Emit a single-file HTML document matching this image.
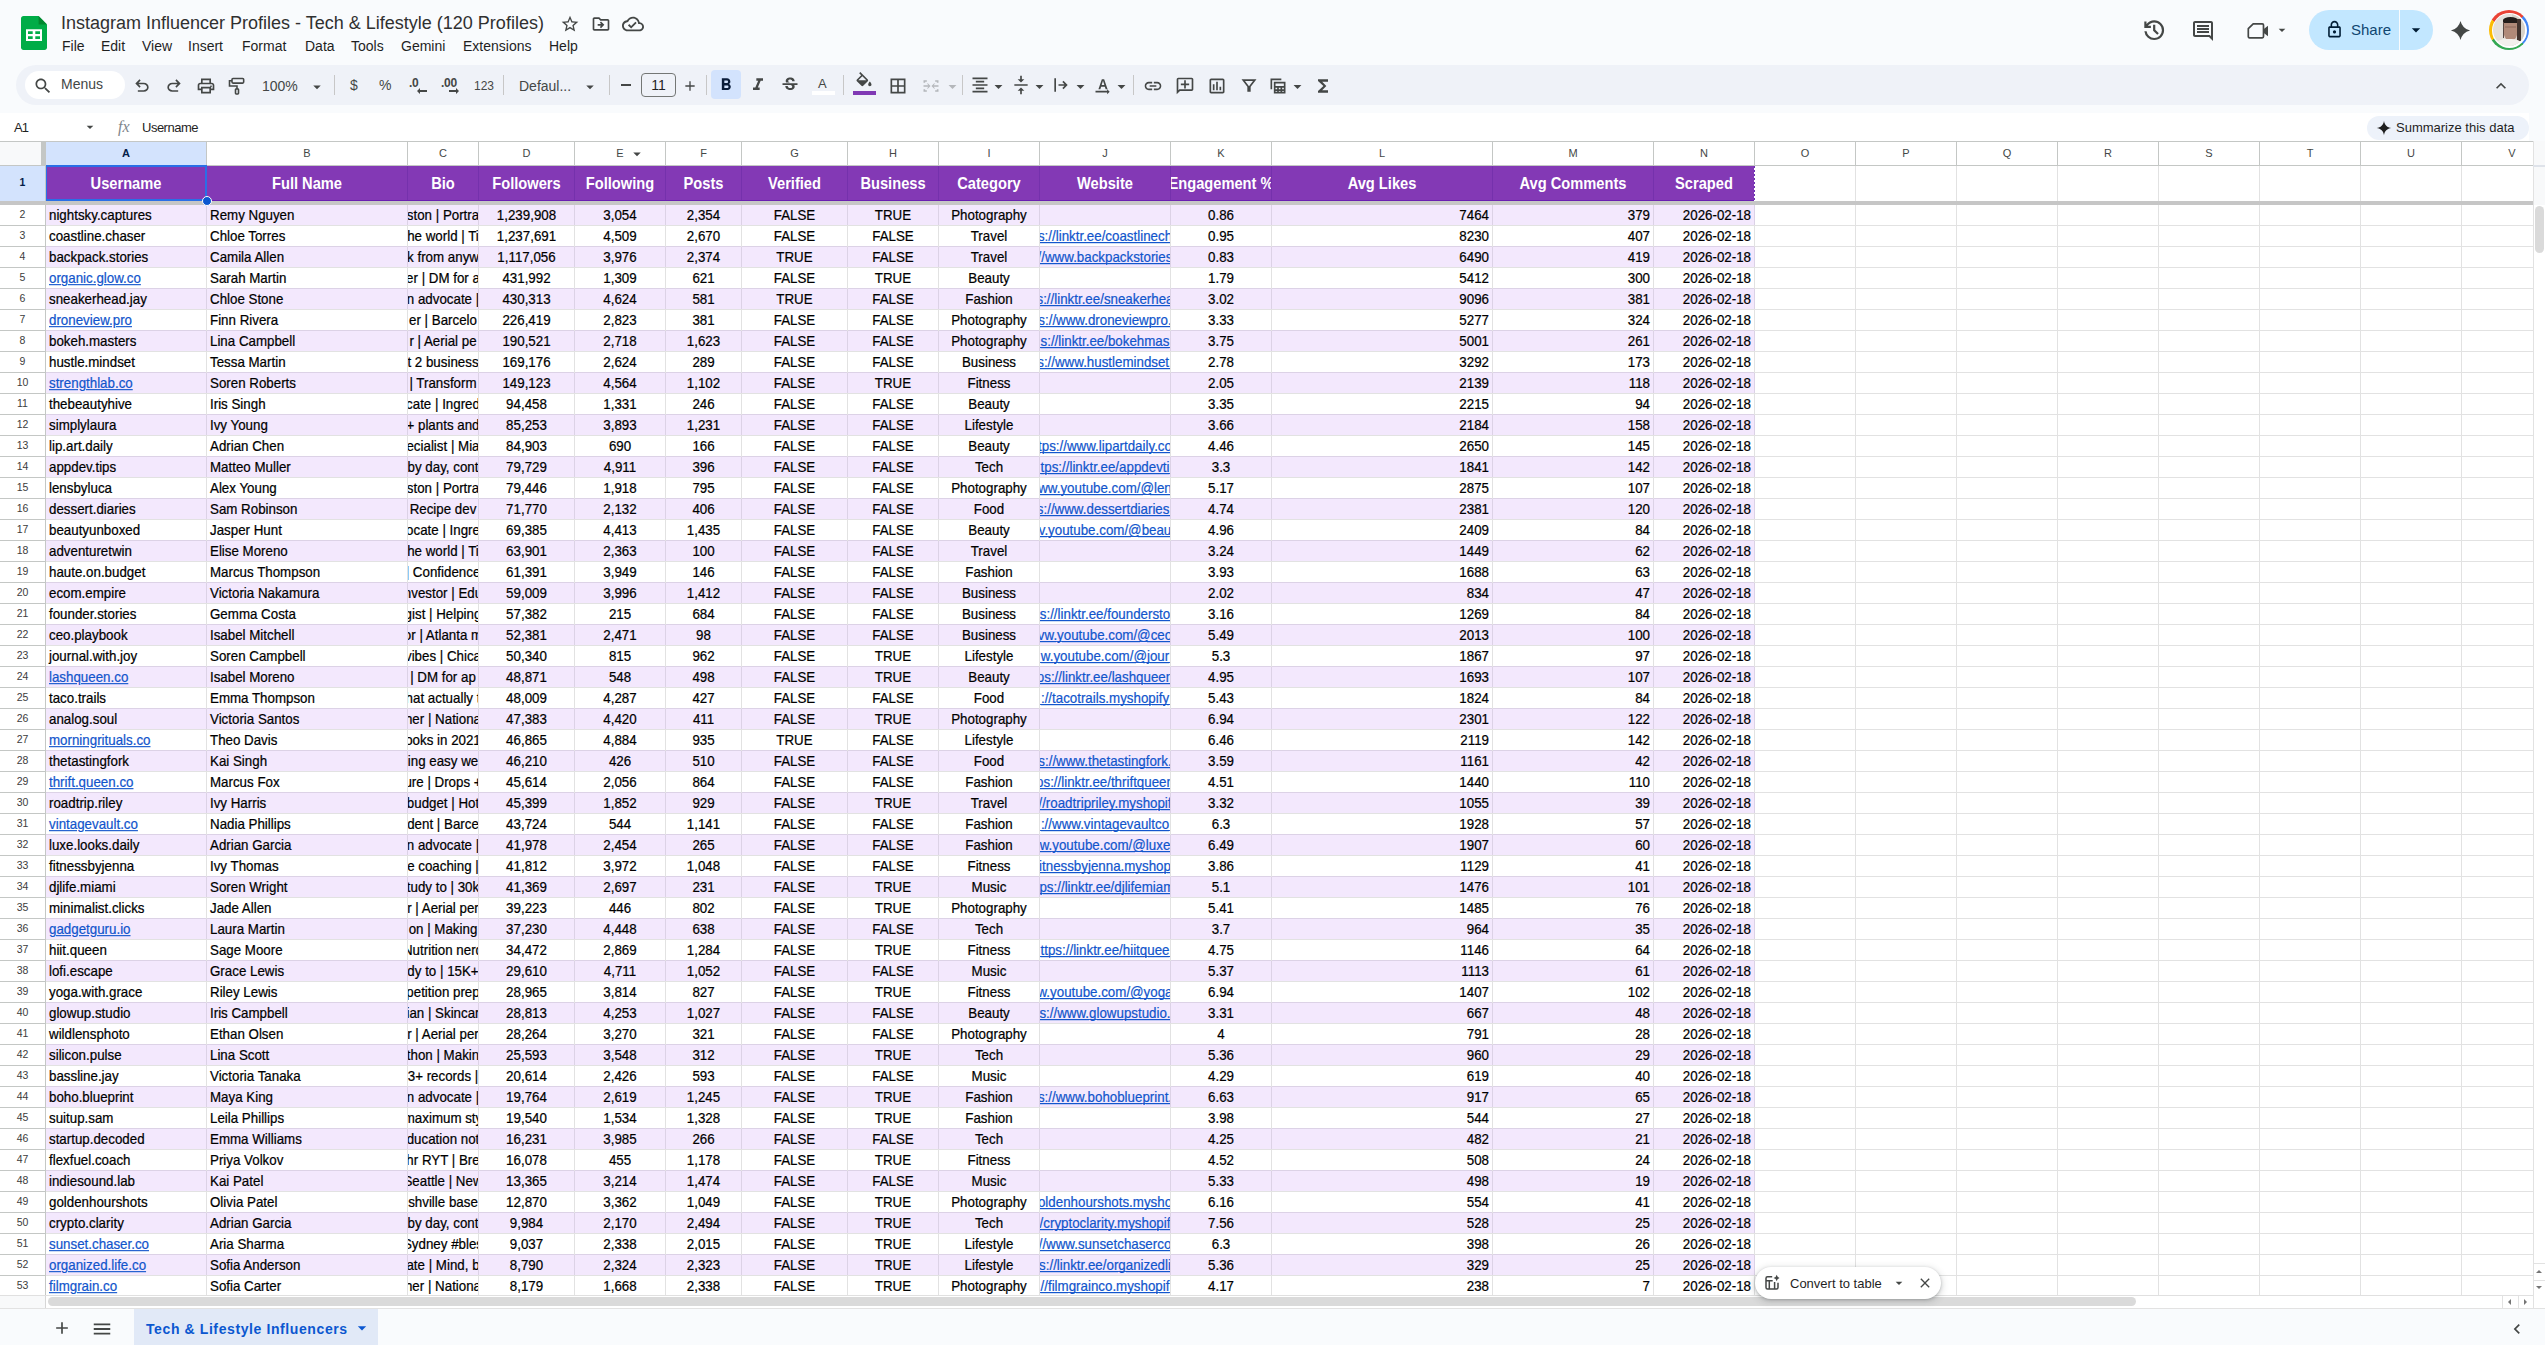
<!DOCTYPE html><html><head><meta charset="utf-8"><style>
*{margin:0;padding:0;box-sizing:border-box}
html,body{width:2545px;height:1345px;overflow:hidden;background:#f9fbfd;font-family:"Liberation Sans",sans-serif;color:#1f1f1f}
.ab{position:absolute}
.t{position:absolute;white-space:nowrap;line-height:1}
.c{position:absolute;white-space:nowrap;overflow:hidden;font-size:13.33px;line-height:20px;height:20px;color:#000;-webkit-text-stroke-width:0.2px;transform:scaleY(1.11);transform-origin:0 5px}
.l{text-align:left;padding-left:3px}
.m{text-align:center}
.r{text-align:right;padding-right:3px}
.lk{color:#1155cc;text-decoration:underline}
.hd{position:absolute;top:166px;height:34px;line-height:34px;font-size:14.67px;font-weight:bold;color:#fff;text-align:center;white-space:nowrap;overflow:hidden;transform:translateY(0.6px) scaleY(1.1);transform-origin:50% 22px}
.ch{position:absolute;top:142px;height:23px;line-height:23px;font-size:11px;color:#444746;text-align:center}
.rn{position:absolute;left:0;width:45px;height:20px;line-height:19px;font-size:10.5px;color:#3c3c3c;text-align:center}
</style></head><body>

<svg class="ab" style="left:21px;top:16px;width:26px;height:34px" viewBox="0 0 26 34">
<path d="M2.5 0H17.6L26 8.6V31.5C26 32.9 24.9 34 23.5 34H2.5C1.1 34 0 32.9 0 31.5V2.5C0 1.1 1.1 0 2.5 0Z" fill="#00ac47"/>
<path d="M17.6 0L26 8.6H17.6Z" fill="#00882f"/>
<path d="M5 13.2H21V25H5Z M7 15.2V18H11.7V15.2Z M14.3 15.2V18H19V15.2Z M7 20.3V23H11.7V20.3Z M14.3 20.3V23H19V20.3Z" fill="#fff" fill-rule="evenodd"/>
</svg>
<div class="t" style="left:61px;top:14px;font-size:18px;color:#303030">Instagram Influencer Profiles - Tech &amp; Lifestyle (120 Profiles)</div>
<svg style="position:absolute;left:560px;top:14px;width:20px;height:20px" viewBox="0 0 24 24"><path fill="#444746" d="M22 9.24l-7.19-.62L12 2 9.19 8.63 2 9.24l5.46 4.73L5.82 21 12 17.27 18.18 21l-1.63-7.03L22 9.24zM12 15.4l-3.76 2.27 1-4.28-3.32-2.88 4.38-.38L12 6.1l1.71 4.04 4.38.38-3.32 2.88 1 4.28L12 15.4z" /></svg>
<svg style="position:absolute;left:591px;top:14px;width:20px;height:20px" viewBox="0 0 24 24"><path fill="#444746" d="M20 6h-8l-2-2H4c-1.1 0-2 .9-2 2v12c0 1.1.9 2 2 2h16c1.1 0 2-.9 2-2V8c0-1.1-.9-2-2-2zm0 12H4V6h5.17l2 2H20v10zM12.16 12L10.6 10.44 12 9l4 4-4 4-1.4-1.44L12.16 14H8v-2z" /></svg>
<svg style="position:absolute;left:622px;top:13px;width:22px;height:22px" viewBox="0 0 24 24"><path fill="#444746" d="M19.35 10.04C18.67 6.59 15.64 4 12 4 9.11 4 6.6 5.64 5.35 8.04 2.34 8.36 0 10.91 0 14c0 3.31 2.69 6 6 6h13c2.76 0 5-2.24 5-5 0-2.64-2.05-4.78-4.65-4.96zM19 18H6c-2.21 0-4-1.79-4-4 0-2.05 1.53-3.76 3.56-3.97l1.07-.11.5-.95C8.08 7.14 9.94 6 12 6c2.62 0 4.88 1.86 5.39 4.43l.3 1.5 1.53.11c1.56.1 2.78 1.41 2.78 2.96 0 1.65-1.35 3-3 3zm-9-3.82l-2.09-2.09L6.5 13.5 10 17l6.01-6.01-1.41-1.41z" /></svg>
<div class="t" style="left:62px;top:39px;font-size:14px;color:#1f1f1f">File</div>
<div class="t" style="left:101px;top:39px;font-size:14px;color:#1f1f1f">Edit</div>
<div class="t" style="left:142px;top:39px;font-size:14px;color:#1f1f1f">View</div>
<div class="t" style="left:188px;top:39px;font-size:14px;color:#1f1f1f">Insert</div>
<div class="t" style="left:242px;top:39px;font-size:14px;color:#1f1f1f">Format</div>
<div class="t" style="left:305px;top:39px;font-size:14px;color:#1f1f1f">Data</div>
<div class="t" style="left:351px;top:39px;font-size:14px;color:#1f1f1f">Tools</div>
<div class="t" style="left:401px;top:39px;font-size:14px;color:#1f1f1f">Gemini</div>
<div class="t" style="left:463px;top:39px;font-size:14px;color:#1f1f1f">Extensions</div>
<div class="t" style="left:549px;top:39px;font-size:14px;color:#1f1f1f">Help</div>
<svg class="ab" style="left:2140.8px;top:16.6px;width:26.4px;height:26.4px" viewBox="0 0 24 24"><path fill="#444746" d="M12 21q-3.45 0-6.012-2.288T3.05 13H5.1q.35 2.6 2.313 4.3T12 19q2.925 0 4.963-2.037T19 12t-2.037-4.962T12 5q-1.725 0-3.225.8T6.25 8H9v2H3V4h2v2.35q1.275-1.6 3.113-2.475T12 3q1.875 0 3.513.713t2.85 1.924 1.925 2.85T21 12t-.712 3.513-1.925 2.85-2.85 1.925T12 21m2.8-4.8L11 12.4V7h2v4.6l3.2 3.2z"/></svg>
<svg style="position:absolute;left:2191px;top:19px;width:24px;height:24px" viewBox="0 0 24 24"><path fill="#444746" d="M21.99 4c0-1.1-.89-2-1.99-2H4c-1.1 0-2 .9-2 2v12c0 1.1.9 2 2 2h14l4 4-.01-18zM20 4v13.17L18.83 16H4V4h16zM6 12h12v2H6zm0-3h12v2H6zm0-3h12v2H6z" /></svg>
<svg class="ab" style="left:2246px;top:21px;width:24px;height:20px" viewBox="0 0 24 20"><path fill="none" stroke="#444746" stroke-width="1.7" stroke-linejoin="round" d="M7.2 2.9H16.3Q17.5 2.9 17.5 4.1V15.6Q17.5 16.8 16.3 16.8H3.5Q2.3 16.8 2.3 15.6V7.7Z"/><path fill="#444746" d="M17.5 8.3L22 4.8V15.2L17.5 11.7Z"/></svg>
<svg style="position:absolute;left:2274px;top:22px;width:16px;height:16px" viewBox="0 0 24 24"><path fill="#444746" d="M7 10l5 5 5-5z" /></svg>
<div class="ab" style="left:2309px;top:10px;width:124px;height:40px;border-radius:20px;background:#c2e7ff"></div>
<div class="ab" style="left:2399px;top:10px;width:1px;height:40px;background:#f9fbfd"></div>
<svg style="position:absolute;left:2325px;top:20px;width:19px;height:19px" viewBox="0 0 24 24"><path fill="#001d35" d="M18 8h-1V6c0-2.76-2.24-5-5-5S7 3.24 7 6v2H6c-1.1 0-2 .9-2 2v10c0 1.1.9 2 2 2h12c1.1 0 2-.9 2-2V10c0-1.1-.9-2-2-2zM9 6c0-1.66 1.34-3 3-3s3 1.34 3 3v2H9V6zm9 14H6V10h12v10zm-6-3c1.1 0 2-.9 2-2s-.9-2-2-2-2 .9-2 2 .9 2 2 2z" /></svg>
<div class="t" style="left:2351px;top:22px;font-size:15px;color:#0f4670">Share</div>
<svg style="position:absolute;left:2406px;top:20px;width:20px;height:20px" viewBox="0 0 24 24"><path fill="#001d35" d="M7 10l5 5 5-5z" /></svg>
<svg style="position:absolute;left:2449px;top:19px;width:23px;height:23px" viewBox="0 0 24 24"><path fill="#444746" d="M12 2Q14 10 22 12Q14 14 12 22Q10 14 2 12Q10 10 12 2Z" /></svg>
<div class="ab" style="left:2489px;top:10px;width:40px;height:40px;border-radius:50%;background:conic-gradient(#ea4335 0deg 45deg,#4285f4 45deg 135deg,#34a853 135deg 240deg,#fbbc04 240deg 300deg,#ea4335 300deg 360deg)"></div>
<div class="ab" style="left:2491.5px;top:12.5px;width:35px;height:35px;border-radius:50%;background:#fff"></div>
<div class="ab" style="left:2493px;top:14px;width:32px;height:32px;border-radius:50%;overflow:hidden;background:#e4e0da"><div class="ab" style="left:19px;top:0;width:13px;height:32px;background:#d8d2ca"></div><div class="ab" style="left:10px;top:4px;width:15px;height:23px;border-radius:45% 45% 50% 50%;background:#b08a78"></div><div class="ab" style="left:10px;top:3px;width:15px;height:6px;border-radius:50% 50% 10% 10%;background:#231d1a"></div><div class="ab" style="left:24px;top:5px;width:4px;height:22px;background:#43352f"></div><div class="ab" style="left:10px;top:8px;width:1px;height:16px;background:#5a4a44"></div><div class="ab" style="left:12px;top:12px;width:11px;height:2px;background:#7d5a4c;opacity:.35"></div><div class="ab" style="left:4px;top:25px;width:24px;height:10px;border-radius:40% 40% 0 0;background:#f2f0ec"></div></div>
<div class="ab" style="left:16px;top:65px;width:2513px;height:40px;border-radius:20px;background:#eff2f8"></div>
<div class="ab" style="left:25px;top:71px;width:100px;height:28px;border-radius:14px;background:#fff"></div>
<svg style="position:absolute;left:33px;top:76px;width:20px;height:20px" viewBox="0 0 24 24"><path fill="#444746" d="M15.5 14h-.79l-.28-.27C15.41 12.59 16 11.11 16 9.5 16 5.91 13.09 3 9.5 3S3 5.91 3 9.5 5.91 16 9.5 16c1.61 0 3.09-.59 4.23-1.57l.27.28v.79l5 4.99L20.49 19l-4.99-5zm-6 0C7.01 14 5 11.99 5 9.5S7.01 5 9.5 5 14 7.01 14 9.5 11.99 14 9.5 14z" /></svg>
<div class="t" style="left:61px;top:77px;font-size:14px;color:#444746">Menus</div>
<svg style="position:absolute;left:132px;top:76px;width:20px;height:20px" viewBox="0 0 24 24"><path fill="#444746" d="M7 19v-2h7.1q1.58 0 2.74-1T18 13.5 16.84 11 14.1 10H7.8l2.6 2.6L9 14 4 9l5-5 1.4 1.4L7.8 8h6.3q2.43 0 4.16 1.58T20 13.5t-1.74 3.93T14.1 19z" /></svg>
<svg class="ab" style="left:164px;top:76px;width:20px;height:20px;transform:scaleX(-1)" viewBox="0 0 24 24"><path fill="#444746" d="M7 19v-2h7.1q1.58 0 2.74-1T18 13.5 16.84 11 14.1 10H7.8l2.6 2.6L9 14 4 9l5-5 1.4 1.4L7.8 8h6.3q2.43 0 4.16 1.58T20 13.5t-1.74 3.93T14.1 19z"/></svg>
<svg style="position:absolute;left:196px;top:76px;width:20px;height:20px" viewBox="0 0 24 24"><path fill="#444746" d="M19 8h-1V3H6v5H5c-1.66 0-3 1.34-3 3v6h4v4h12v-4h4v-6c0-1.66-1.34-3-3-3zM8 5h8v3H8V5zm8 14H8v-4h8v4zm4-4h-2v-2H6v2H4v-4c0-.55.45-1 1-1h14c.55 0 1 .45 1 1v4z M18 11.5a1 1 0 1 0 0.01 0z" /></svg>
<svg class="ab" style="left:227px;top:76px;width:20px;height:20px" viewBox="0 0 24 24"><g fill="none" stroke="#444746" stroke-width="1.9" transform="translate(24,0) scale(-1,1)"><rect x="4" y="3" width="14" height="5.5" rx="1.2"/><path d="M18 5.7H21V12H12V15.5"/><rect x="10.2" y="15.5" width="3.6" height="6" rx="0.8"/></g></svg>
<div class="t" style="left:262px;top:79px;font-size:14px;color:#444746">100%</div>
<svg style="position:absolute;left:308px;top:78px;width:18px;height:18px" viewBox="0 0 24 24"><path fill="#444746" d="M7 10l5 5 5-5z" /></svg>
<div class="ab" style="left:334px;top:75px;width:1px;height:20px;background:#c7c7c7"></div>
<div class="t" style="left:350px;top:78px;font-size:14px;color:#444746">$</div>
<div class="t" style="left:379px;top:78px;font-size:14px;color:#444746">%</div>
<div class="t" style="left:409px;top:77px;font-size:12px;font-weight:bold;color:#444746;letter-spacing:-0.3px">.0</div>
<svg style="position:absolute;left:417px;top:88px;width:10px;height:6px" viewBox="0 0 10 6"><path fill="#444746" d="M0 3L3 0V2H10V4H3V6Z" /></svg>
<div class="t" style="left:441px;top:77px;font-size:12px;font-weight:bold;color:#444746;letter-spacing:-0.3px">.00</div>
<svg style="position:absolute;left:449px;top:88px;width:10px;height:6px" viewBox="0 0 10 6"><path fill="#444746" d="M10 3L7 0V2H0V4H7V6Z" /></svg>
<div class="t" style="left:474px;top:80px;font-size:12px;color:#444746">123</div>
<div class="ab" style="left:503px;top:75px;width:1px;height:20px;background:#c7c7c7"></div>
<div class="t" style="left:519px;top:79px;font-size:14px;color:#444746">Defaul...</div>
<svg style="position:absolute;left:581px;top:78px;width:18px;height:18px" viewBox="0 0 24 24"><path fill="#444746" d="M7 10l5 5 5-5z" /></svg>
<div class="ab" style="left:609px;top:75px;width:1px;height:20px;background:#c7c7c7"></div>
<div class="ab" style="left:621px;top:84px;width:10px;height:2px;background:#444746"></div>
<div class="ab" style="left:641px;top:73px;width:35px;height:24px;border:1px solid #747775;border-radius:4px"></div>
<div class="t" style="left:641px;top:78px;width:35px;text-align:center;font-size:14px;color:#1f1f1f">11</div>
<svg style="position:absolute;left:682px;top:78px;width:16px;height:16px" viewBox="0 0 24 24"><path fill="#444746" d="M19 13h-6v6h-2v-6H5v-2h6V5h2v6h6v2z" /></svg>
<div class="ab" style="left:706px;top:75px;width:1px;height:20px;background:#c7c7c7"></div>
<div class="ab" style="left:711px;top:70px;width:30px;height:29px;border-radius:4px;background:#d3e3fd"></div>
<svg style="position:absolute;left:716px;top:75px;width:20px;height:20px" viewBox="0 0 24 24"><path fill="#0b1d3a" d="M15.6 10.79c.97-.67 1.65-1.77 1.65-2.79 0-2.26-1.75-4-4-4H7v14h7.04c2.09 0 3.71-1.7 3.71-3.79 0-1.52-.86-2.82-2.15-3.42zM10 6.5h3c.83 0 1.5.67 1.5 1.5s-.67 1.5-1.5 1.5h-3v-3zm3.5 9H10v-3h3.5c.83 0 1.5.67 1.5 1.5s-.67 1.5-1.5 1.5z" /></svg>
<svg style="position:absolute;left:748px;top:75px;width:20px;height:20px" viewBox="0 0 24 24"><path fill="#444746" d="M10 4v3h2.21l-3.42 8H6v3h8v-3h-2.21l3.42-8H18V4z" /></svg>
<svg style="position:absolute;left:780px;top:75px;width:20px;height:20px" viewBox="0 0 24 24"><path fill="#444746" d="M7.24 8.75c-.26-.48-.39-1.03-.39-1.67 0-.61.13-1.16.4-1.67.26-.5.63-.93 1.11-1.29.48-.35 1.05-.63 1.7-.83.66-.19 1.39-.29 2.18-.29.81 0 1.54.11 2.21.34.66.22 1.23.54 1.69.94.47.4.83.88 1.08 1.43.25.55.38 1.15.38 1.81h-3.01c0-.31-.05-.59-.15-.85-.09-.27-.24-.49-.44-.68-.2-.19-.45-.33-.75-.44-.3-.1-.66-.16-1.06-.16-.39 0-.74.04-1.03.13-.29.09-.53.21-.72.36-.19.16-.34.34-.44.55-.1.21-.15.43-.15.66 0 .48.25.88.74 1.21.38.25.77.48 1.41.7H7.39c-.05-.08-.11-.17-.15-.25zM21 12v-2H3v2h9.62c.18.07.4.14.55.2.37.17.66.34.87.51.21.17.35.36.43.57.07.2.11.43.11.69 0 .23-.05.45-.14.66-.09.2-.23.38-.42.53-.19.15-.42.26-.71.35-.29.08-.63.13-1.01.13-.43 0-.83-.04-1.18-.13s-.66-.23-.91-.42c-.25-.19-.45-.44-.59-.75-.14-.31-.25-.76-.25-1.21H6.4c0 .55.08 1.13.24 1.58.16.45.37.85.65 1.21.28.35.6.66.98.92.37.26.78.48 1.22.65.44.17.9.3 1.38.39.48.08.96.13 1.44.13.8 0 1.53-.09 2.18-.28s1.21-.45 1.67-.79c.46-.34.82-.77 1.07-1.27s.38-1.07.38-1.71c0-.6-.1-1.14-.31-1.61-.05-.11-.11-.23-.17-.33H21z" /></svg>
<div class="t" style="left:818px;top:77px;font-size:13px;color:#444746">A</div>
<div class="ab" style="left:812px;top:91px;width:23px;height:4px;background:#ffffff"></div>
<div class="ab" style="left:843px;top:75px;width:1px;height:20px;background:#c7c7c7"></div>
<svg style="position:absolute;left:854px;top:72px;width:20px;height:20px" viewBox="0 0 24 24"><path fill="#444746" d="M16.56 8.94L7.62 0 6.21 1.41l2.38 2.38-5.15 5.15c-.59.59-.59 1.54 0 2.12l5.5 5.5c.29.29.68.44 1.06.44s.77-.15 1.06-.44l5.5-5.5c.59-.58.59-1.53 0-2.12zM5.21 10L10 5.21 14.79 10H5.21zM19 11.5s-2 2.17-2 3.5c0 1.1.9 2 2 2s2-.9 2-2c0-1.33-2-3.5-2-3.5z" /></svg>
<div class="ab" style="left:853px;top:91px;width:23px;height:4px;background:#8039b4"></div>
<svg style="position:absolute;left:888px;top:76px;width:20px;height:20px" viewBox="0 0 24 24"><path fill="#444746" d="M3 3v18h18V3H3zm8 16H5v-6h6v6zm0-8H5V5h6v6zm8 8h-6v-6h6v6zm0-8h-6V5h6v6z" /></svg>
<svg style="position:absolute;left:921px;top:76px;width:20px;height:20px" viewBox="0 0 24 24"><path fill="#b4b7bb" d="M3 5h2v3H3zM3 16h2v3H3zM3 5h4v2H3zM3 17h4v2H3zM19 5h2v3h-2zM19 16h2v3h-2zM17 5h4v2h-4zM17 17h4v2h-4zM3 11h6l-2-2 1.4-0 3 3-3 3H7l2-2H3zM21 11h-6l2-2h-1.4l-3 3 3 3H17l-2-2h6z" /></svg>
<svg style="position:absolute;left:942.5px;top:76.5px;width:19px;height:19px" viewBox="0 0 24 24"><path fill="#b4b7bb" d="M7 10l5 5 5-5z" /></svg>
<div class="ab" style="left:962px;top:75px;width:1px;height:20px;background:#c7c7c7"></div>
<svg style="position:absolute;left:970px;top:75px;width:20px;height:20px" viewBox="0 0 24 24"><path fill="#444746" d="M7 15v2h10v-2H7zm-4 6h18v-2H3v2zm0-8h18v-2H3v2zm4-6v2h10V7H7zM3 3v2h18V3H3z" /></svg>
<svg style="position:absolute;left:988.5px;top:76.5px;width:19px;height:19px" viewBox="0 0 24 24"><path fill="#444746" d="M7 10l5 5 5-5z" /></svg>
<svg style="position:absolute;left:1011px;top:75px;width:20px;height:20px" viewBox="0 0 24 24"><path fill="#444746" d="M8 19h3v4h2v-4h3l-4-4-4 4zm8-14h-3V1h-2v4H8l4 4 4-4zM4 11v2h16v-2H4z" /></svg>
<svg style="position:absolute;left:1029.5px;top:76.5px;width:19px;height:19px" viewBox="0 0 24 24"><path fill="#444746" d="M7 10l5 5 5-5z" /></svg>
<svg style="position:absolute;left:1051px;top:75px;width:20px;height:20px" viewBox="0 0 24 24"><path fill="#444746" d="M4 4h2v16H4zM9 11h7.2l-2.6-2.6L15 7l5 5-5 5-1.4-1.4 2.6-2.6H9z" /></svg>
<svg style="position:absolute;left:1070.5px;top:76.5px;width:19px;height:19px" viewBox="0 0 24 24"><path fill="#444746" d="M7 10l5 5 5-5z" /></svg>
<svg style="position:absolute;left:1093px;top:75px;width:20px;height:20px" viewBox="0 0 24 24"><path fill="#444746" d="M6.5 17L10.6 5h2.8l4.1 12h-2.3l-1-3H9.8l-1 3zM10.4 12h3.2L12 7zM3 19h14v-2l3 3-3 3v-2H3z" /></svg>
<svg style="position:absolute;left:1111.5px;top:76.5px;width:19px;height:19px" viewBox="0 0 24 24"><path fill="#444746" d="M7 10l5 5 5-5z" /></svg>
<div class="ab" style="left:1133px;top:75px;width:1px;height:20px;background:#c7c7c7"></div>
<svg style="position:absolute;left:1143px;top:76px;width:20px;height:20px" viewBox="0 0 24 24"><path fill="#444746" d="M3.9 12c0-1.71 1.39-3.1 3.1-3.1h4V7H7c-2.76 0-5 2.24-5 5s2.24 5 5 5h4v-1.9H7c-1.71 0-3.1-1.39-3.1-3.1zM8 13h8v-2H8v2zm9-6h-4v1.9h4c1.71 0 3.1 1.39 3.1 3.1s-1.39 3.1-3.1 3.1h-4V17h4c2.76 0 5-2.24 5-5s-2.24-5-5-5z" /></svg>
<svg style="position:absolute;left:1175px;top:76px;width:20px;height:20px" viewBox="0 0 24 24"><path fill="#444746" d="M22 4c0-1.1-.9-2-2-2H4c-1.1 0-1.99.9-1.99 2L2 16c0 1.1.9 2 2 2h14l4 4V4zm-2 0v13.17L18.83 16H4V4h16zM13 5h-2v4H7v2h4v4h2v-4h4V9h-4z" transform="translate(24,0) scale(-1,1)"/></svg>
<svg style="position:absolute;left:1207px;top:76px;width:20px;height:20px" viewBox="0 0 24 24"><path fill="#444746" d="M19 3H5c-1.1 0-2 .9-2 2v14c0 1.1.9 2 2 2h14c1.1 0 2-.9 2-2V5c0-1.1-.9-2-2-2zm0 16H5V5h14v14zM7 10h2v7H7zm4-3h2v10h-2zm4 6h2v4h-2z" /></svg>
<svg style="position:absolute;left:1239px;top:76px;width:20px;height:20px" viewBox="0 0 24 24"><path fill="#444746" d="M3 4h18l-7 9v6h-4v-6zM7.2 6L12 12.2 16.8 6z M11 13h2v5h-2z" /></svg>
<svg style="position:absolute;left:1268px;top:76px;width:20px;height:20px" viewBox="0 0 24 24"><path fill="#444746" d="M3 3h13v2H5v11H3z M7 7h14v14H7z M9 9v3h10V9z M9 14v2h2v-2z M13 14v2h2v-2z M17 14v2h2v-2z M9 18v1h2v-1z M13 18v1h2v-1z M17 18v1h2v-1z" fill-rule="evenodd"/></svg>
<svg style="position:absolute;left:1287.5px;top:76.5px;width:19px;height:19px" viewBox="0 0 24 24"><path fill="#444746" d="M7 10l5 5 5-5z" /></svg>
<svg style="position:absolute;left:1313px;top:76px;width:20px;height:20px" viewBox="0 0 24 24"><path fill="#444746" d="M18 4H6v2l6.5 6L6 18v2h12v-3h-7l5-5-5-5h7z" /></svg>
<svg style="position:absolute;left:2491px;top:76px;width:20px;height:20px" viewBox="0 0 24 24"><path fill="#444746" d="M12 8l-6 6 1.41 1.41L12 10.83l4.59 4.58L18 14z" /></svg>
<div class="ab" style="left:0;top:113px;width:2529px;height:28px;background:#fff"></div>
<div class="t" style="left:14px;top:121px;font-size:13px;letter-spacing:-0.8px;color:#1f1f1f">A1</div>
<svg style="position:absolute;left:82px;top:119px;width:16px;height:16px" viewBox="0 0 24 24"><path fill="#444746" d="M7 10l5 5 5-5z" /></svg>
<div class="t" style="left:118px;top:119px;font-size:16px;font-family:'Liberation Serif',serif;font-style:italic;color:#80868b">fx</div>
<div class="t" style="left:142px;top:121px;font-size:13px;letter-spacing:-0.5px;color:#1f1f1f">Username</div>
<div class="ab" style="left:2367px;top:116px;width:162px;height:24px;border-radius:12px;background:#edf2fa"></div>
<svg style="position:absolute;left:2376px;top:120px;width:16px;height:16px" viewBox="0 0 24 24"><path fill="#1f1f1f" d="M12 1C12.6 7 17 11.4 23 12 17 12.6 12.6 17 12 23 11.4 17 7 12.6 1 12 7 11.4 11.4 7 12 1Z" /></svg>
<div class="t" style="left:2396px;top:121px;font-size:13px;color:#1f1f1f">Summarize this data</div>
<div class="ab" style="left:0;top:141px;width:2533px;height:1155px;background:#fff"></div>
<div class="ab" style="left:46px;top:205px;width:1708px;height:20px;background:#f3e8fd"></div>
<div class="ab" style="left:46px;top:247px;width:1708px;height:20px;background:#f3e8fd"></div>
<div class="ab" style="left:46px;top:289px;width:1708px;height:20px;background:#f3e8fd"></div>
<div class="ab" style="left:46px;top:331px;width:1708px;height:20px;background:#f3e8fd"></div>
<div class="ab" style="left:46px;top:373px;width:1708px;height:20px;background:#f3e8fd"></div>
<div class="ab" style="left:46px;top:415px;width:1708px;height:20px;background:#f3e8fd"></div>
<div class="ab" style="left:46px;top:457px;width:1708px;height:20px;background:#f3e8fd"></div>
<div class="ab" style="left:46px;top:499px;width:1708px;height:20px;background:#f3e8fd"></div>
<div class="ab" style="left:46px;top:541px;width:1708px;height:20px;background:#f3e8fd"></div>
<div class="ab" style="left:46px;top:583px;width:1708px;height:20px;background:#f3e8fd"></div>
<div class="ab" style="left:46px;top:625px;width:1708px;height:20px;background:#f3e8fd"></div>
<div class="ab" style="left:46px;top:667px;width:1708px;height:20px;background:#f3e8fd"></div>
<div class="ab" style="left:46px;top:709px;width:1708px;height:20px;background:#f3e8fd"></div>
<div class="ab" style="left:46px;top:751px;width:1708px;height:20px;background:#f3e8fd"></div>
<div class="ab" style="left:46px;top:793px;width:1708px;height:20px;background:#f3e8fd"></div>
<div class="ab" style="left:46px;top:835px;width:1708px;height:20px;background:#f3e8fd"></div>
<div class="ab" style="left:46px;top:877px;width:1708px;height:20px;background:#f3e8fd"></div>
<div class="ab" style="left:46px;top:919px;width:1708px;height:20px;background:#f3e8fd"></div>
<div class="ab" style="left:46px;top:961px;width:1708px;height:20px;background:#f3e8fd"></div>
<div class="ab" style="left:46px;top:1003px;width:1708px;height:20px;background:#f3e8fd"></div>
<div class="ab" style="left:46px;top:1045px;width:1708px;height:20px;background:#f3e8fd"></div>
<div class="ab" style="left:46px;top:1087px;width:1708px;height:20px;background:#f3e8fd"></div>
<div class="ab" style="left:46px;top:1129px;width:1708px;height:20px;background:#f3e8fd"></div>
<div class="ab" style="left:46px;top:1171px;width:1708px;height:20px;background:#f3e8fd"></div>
<div class="ab" style="left:46px;top:1213px;width:1708px;height:20px;background:#f3e8fd"></div>
<div class="ab" style="left:46px;top:1255px;width:1708px;height:20px;background:#f3e8fd"></div>
<div class="ab" style="left:0;top:225px;width:45px;height:1px;background:#c4c7c5"></div>
<div class="ab" style="left:46px;top:225px;width:2487px;height:1px;background:#e2e2e2"></div>
<div class="ab" style="left:0;top:246px;width:45px;height:1px;background:#c4c7c5"></div>
<div class="ab" style="left:46px;top:246px;width:2487px;height:1px;background:#e2e2e2"></div>
<div class="ab" style="left:46px;top:246px;width:1708px;height:1px;background:#dcd2e6"></div>
<div class="ab" style="left:0;top:267px;width:45px;height:1px;background:#c4c7c5"></div>
<div class="ab" style="left:46px;top:267px;width:2487px;height:1px;background:#e2e2e2"></div>
<div class="ab" style="left:0;top:288px;width:45px;height:1px;background:#c4c7c5"></div>
<div class="ab" style="left:46px;top:288px;width:2487px;height:1px;background:#e2e2e2"></div>
<div class="ab" style="left:46px;top:288px;width:1708px;height:1px;background:#dcd2e6"></div>
<div class="ab" style="left:0;top:309px;width:45px;height:1px;background:#c4c7c5"></div>
<div class="ab" style="left:46px;top:309px;width:2487px;height:1px;background:#e2e2e2"></div>
<div class="ab" style="left:0;top:330px;width:45px;height:1px;background:#c4c7c5"></div>
<div class="ab" style="left:46px;top:330px;width:2487px;height:1px;background:#e2e2e2"></div>
<div class="ab" style="left:46px;top:330px;width:1708px;height:1px;background:#dcd2e6"></div>
<div class="ab" style="left:0;top:351px;width:45px;height:1px;background:#c4c7c5"></div>
<div class="ab" style="left:46px;top:351px;width:2487px;height:1px;background:#e2e2e2"></div>
<div class="ab" style="left:0;top:372px;width:45px;height:1px;background:#c4c7c5"></div>
<div class="ab" style="left:46px;top:372px;width:2487px;height:1px;background:#e2e2e2"></div>
<div class="ab" style="left:46px;top:372px;width:1708px;height:1px;background:#dcd2e6"></div>
<div class="ab" style="left:0;top:393px;width:45px;height:1px;background:#c4c7c5"></div>
<div class="ab" style="left:46px;top:393px;width:2487px;height:1px;background:#e2e2e2"></div>
<div class="ab" style="left:0;top:414px;width:45px;height:1px;background:#c4c7c5"></div>
<div class="ab" style="left:46px;top:414px;width:2487px;height:1px;background:#e2e2e2"></div>
<div class="ab" style="left:46px;top:414px;width:1708px;height:1px;background:#dcd2e6"></div>
<div class="ab" style="left:0;top:435px;width:45px;height:1px;background:#c4c7c5"></div>
<div class="ab" style="left:46px;top:435px;width:2487px;height:1px;background:#e2e2e2"></div>
<div class="ab" style="left:0;top:456px;width:45px;height:1px;background:#c4c7c5"></div>
<div class="ab" style="left:46px;top:456px;width:2487px;height:1px;background:#e2e2e2"></div>
<div class="ab" style="left:46px;top:456px;width:1708px;height:1px;background:#dcd2e6"></div>
<div class="ab" style="left:0;top:477px;width:45px;height:1px;background:#c4c7c5"></div>
<div class="ab" style="left:46px;top:477px;width:2487px;height:1px;background:#e2e2e2"></div>
<div class="ab" style="left:0;top:498px;width:45px;height:1px;background:#c4c7c5"></div>
<div class="ab" style="left:46px;top:498px;width:2487px;height:1px;background:#e2e2e2"></div>
<div class="ab" style="left:46px;top:498px;width:1708px;height:1px;background:#dcd2e6"></div>
<div class="ab" style="left:0;top:519px;width:45px;height:1px;background:#c4c7c5"></div>
<div class="ab" style="left:46px;top:519px;width:2487px;height:1px;background:#e2e2e2"></div>
<div class="ab" style="left:0;top:540px;width:45px;height:1px;background:#c4c7c5"></div>
<div class="ab" style="left:46px;top:540px;width:2487px;height:1px;background:#e2e2e2"></div>
<div class="ab" style="left:46px;top:540px;width:1708px;height:1px;background:#dcd2e6"></div>
<div class="ab" style="left:0;top:561px;width:45px;height:1px;background:#c4c7c5"></div>
<div class="ab" style="left:46px;top:561px;width:2487px;height:1px;background:#e2e2e2"></div>
<div class="ab" style="left:0;top:582px;width:45px;height:1px;background:#c4c7c5"></div>
<div class="ab" style="left:46px;top:582px;width:2487px;height:1px;background:#e2e2e2"></div>
<div class="ab" style="left:46px;top:582px;width:1708px;height:1px;background:#dcd2e6"></div>
<div class="ab" style="left:0;top:603px;width:45px;height:1px;background:#c4c7c5"></div>
<div class="ab" style="left:46px;top:603px;width:2487px;height:1px;background:#e2e2e2"></div>
<div class="ab" style="left:0;top:624px;width:45px;height:1px;background:#c4c7c5"></div>
<div class="ab" style="left:46px;top:624px;width:2487px;height:1px;background:#e2e2e2"></div>
<div class="ab" style="left:46px;top:624px;width:1708px;height:1px;background:#dcd2e6"></div>
<div class="ab" style="left:0;top:645px;width:45px;height:1px;background:#c4c7c5"></div>
<div class="ab" style="left:46px;top:645px;width:2487px;height:1px;background:#e2e2e2"></div>
<div class="ab" style="left:0;top:666px;width:45px;height:1px;background:#c4c7c5"></div>
<div class="ab" style="left:46px;top:666px;width:2487px;height:1px;background:#e2e2e2"></div>
<div class="ab" style="left:46px;top:666px;width:1708px;height:1px;background:#dcd2e6"></div>
<div class="ab" style="left:0;top:687px;width:45px;height:1px;background:#c4c7c5"></div>
<div class="ab" style="left:46px;top:687px;width:2487px;height:1px;background:#e2e2e2"></div>
<div class="ab" style="left:0;top:708px;width:45px;height:1px;background:#c4c7c5"></div>
<div class="ab" style="left:46px;top:708px;width:2487px;height:1px;background:#e2e2e2"></div>
<div class="ab" style="left:46px;top:708px;width:1708px;height:1px;background:#dcd2e6"></div>
<div class="ab" style="left:0;top:729px;width:45px;height:1px;background:#c4c7c5"></div>
<div class="ab" style="left:46px;top:729px;width:2487px;height:1px;background:#e2e2e2"></div>
<div class="ab" style="left:0;top:750px;width:45px;height:1px;background:#c4c7c5"></div>
<div class="ab" style="left:46px;top:750px;width:2487px;height:1px;background:#e2e2e2"></div>
<div class="ab" style="left:46px;top:750px;width:1708px;height:1px;background:#dcd2e6"></div>
<div class="ab" style="left:0;top:771px;width:45px;height:1px;background:#c4c7c5"></div>
<div class="ab" style="left:46px;top:771px;width:2487px;height:1px;background:#e2e2e2"></div>
<div class="ab" style="left:0;top:792px;width:45px;height:1px;background:#c4c7c5"></div>
<div class="ab" style="left:46px;top:792px;width:2487px;height:1px;background:#e2e2e2"></div>
<div class="ab" style="left:46px;top:792px;width:1708px;height:1px;background:#dcd2e6"></div>
<div class="ab" style="left:0;top:813px;width:45px;height:1px;background:#c4c7c5"></div>
<div class="ab" style="left:46px;top:813px;width:2487px;height:1px;background:#e2e2e2"></div>
<div class="ab" style="left:0;top:834px;width:45px;height:1px;background:#c4c7c5"></div>
<div class="ab" style="left:46px;top:834px;width:2487px;height:1px;background:#e2e2e2"></div>
<div class="ab" style="left:46px;top:834px;width:1708px;height:1px;background:#dcd2e6"></div>
<div class="ab" style="left:0;top:855px;width:45px;height:1px;background:#c4c7c5"></div>
<div class="ab" style="left:46px;top:855px;width:2487px;height:1px;background:#e2e2e2"></div>
<div class="ab" style="left:0;top:876px;width:45px;height:1px;background:#c4c7c5"></div>
<div class="ab" style="left:46px;top:876px;width:2487px;height:1px;background:#e2e2e2"></div>
<div class="ab" style="left:46px;top:876px;width:1708px;height:1px;background:#dcd2e6"></div>
<div class="ab" style="left:0;top:897px;width:45px;height:1px;background:#c4c7c5"></div>
<div class="ab" style="left:46px;top:897px;width:2487px;height:1px;background:#e2e2e2"></div>
<div class="ab" style="left:0;top:918px;width:45px;height:1px;background:#c4c7c5"></div>
<div class="ab" style="left:46px;top:918px;width:2487px;height:1px;background:#e2e2e2"></div>
<div class="ab" style="left:46px;top:918px;width:1708px;height:1px;background:#dcd2e6"></div>
<div class="ab" style="left:0;top:939px;width:45px;height:1px;background:#c4c7c5"></div>
<div class="ab" style="left:46px;top:939px;width:2487px;height:1px;background:#e2e2e2"></div>
<div class="ab" style="left:0;top:960px;width:45px;height:1px;background:#c4c7c5"></div>
<div class="ab" style="left:46px;top:960px;width:2487px;height:1px;background:#e2e2e2"></div>
<div class="ab" style="left:46px;top:960px;width:1708px;height:1px;background:#dcd2e6"></div>
<div class="ab" style="left:0;top:981px;width:45px;height:1px;background:#c4c7c5"></div>
<div class="ab" style="left:46px;top:981px;width:2487px;height:1px;background:#e2e2e2"></div>
<div class="ab" style="left:0;top:1002px;width:45px;height:1px;background:#c4c7c5"></div>
<div class="ab" style="left:46px;top:1002px;width:2487px;height:1px;background:#e2e2e2"></div>
<div class="ab" style="left:46px;top:1002px;width:1708px;height:1px;background:#dcd2e6"></div>
<div class="ab" style="left:0;top:1023px;width:45px;height:1px;background:#c4c7c5"></div>
<div class="ab" style="left:46px;top:1023px;width:2487px;height:1px;background:#e2e2e2"></div>
<div class="ab" style="left:0;top:1044px;width:45px;height:1px;background:#c4c7c5"></div>
<div class="ab" style="left:46px;top:1044px;width:2487px;height:1px;background:#e2e2e2"></div>
<div class="ab" style="left:46px;top:1044px;width:1708px;height:1px;background:#dcd2e6"></div>
<div class="ab" style="left:0;top:1065px;width:45px;height:1px;background:#c4c7c5"></div>
<div class="ab" style="left:46px;top:1065px;width:2487px;height:1px;background:#e2e2e2"></div>
<div class="ab" style="left:0;top:1086px;width:45px;height:1px;background:#c4c7c5"></div>
<div class="ab" style="left:46px;top:1086px;width:2487px;height:1px;background:#e2e2e2"></div>
<div class="ab" style="left:46px;top:1086px;width:1708px;height:1px;background:#dcd2e6"></div>
<div class="ab" style="left:0;top:1107px;width:45px;height:1px;background:#c4c7c5"></div>
<div class="ab" style="left:46px;top:1107px;width:2487px;height:1px;background:#e2e2e2"></div>
<div class="ab" style="left:0;top:1128px;width:45px;height:1px;background:#c4c7c5"></div>
<div class="ab" style="left:46px;top:1128px;width:2487px;height:1px;background:#e2e2e2"></div>
<div class="ab" style="left:46px;top:1128px;width:1708px;height:1px;background:#dcd2e6"></div>
<div class="ab" style="left:0;top:1149px;width:45px;height:1px;background:#c4c7c5"></div>
<div class="ab" style="left:46px;top:1149px;width:2487px;height:1px;background:#e2e2e2"></div>
<div class="ab" style="left:0;top:1170px;width:45px;height:1px;background:#c4c7c5"></div>
<div class="ab" style="left:46px;top:1170px;width:2487px;height:1px;background:#e2e2e2"></div>
<div class="ab" style="left:46px;top:1170px;width:1708px;height:1px;background:#dcd2e6"></div>
<div class="ab" style="left:0;top:1191px;width:45px;height:1px;background:#c4c7c5"></div>
<div class="ab" style="left:46px;top:1191px;width:2487px;height:1px;background:#e2e2e2"></div>
<div class="ab" style="left:0;top:1212px;width:45px;height:1px;background:#c4c7c5"></div>
<div class="ab" style="left:46px;top:1212px;width:2487px;height:1px;background:#e2e2e2"></div>
<div class="ab" style="left:46px;top:1212px;width:1708px;height:1px;background:#dcd2e6"></div>
<div class="ab" style="left:0;top:1233px;width:45px;height:1px;background:#c4c7c5"></div>
<div class="ab" style="left:46px;top:1233px;width:2487px;height:1px;background:#e2e2e2"></div>
<div class="ab" style="left:0;top:1254px;width:45px;height:1px;background:#c4c7c5"></div>
<div class="ab" style="left:46px;top:1254px;width:2487px;height:1px;background:#e2e2e2"></div>
<div class="ab" style="left:46px;top:1254px;width:1708px;height:1px;background:#dcd2e6"></div>
<div class="ab" style="left:0;top:1275px;width:45px;height:1px;background:#c4c7c5"></div>
<div class="ab" style="left:46px;top:1275px;width:2487px;height:1px;background:#e2e2e2"></div>
<div class="ab" style="left:0;top:1296px;width:45px;height:1px;background:#c4c7c5"></div>
<div class="ab" style="left:46px;top:1296px;width:2487px;height:1px;background:#e2e2e2"></div>
<div class="ab" style="left:206px;top:205px;width:1px;height:1090px;background:#e2e2e2"></div>
<div class="ab" style="left:407px;top:205px;width:1px;height:1090px;background:#e2e2e2"></div>
<div class="ab" style="left:478px;top:205px;width:1px;height:1090px;background:#e2e2e2"></div>
<div class="ab" style="left:574px;top:205px;width:1px;height:1090px;background:#e2e2e2"></div>
<div class="ab" style="left:665px;top:205px;width:1px;height:1090px;background:#e2e2e2"></div>
<div class="ab" style="left:741px;top:205px;width:1px;height:1090px;background:#e2e2e2"></div>
<div class="ab" style="left:847px;top:205px;width:1px;height:1090px;background:#e2e2e2"></div>
<div class="ab" style="left:938px;top:205px;width:1px;height:1090px;background:#e2e2e2"></div>
<div class="ab" style="left:1039px;top:205px;width:1px;height:1090px;background:#e2e2e2"></div>
<div class="ab" style="left:1170px;top:205px;width:1px;height:1090px;background:#e2e2e2"></div>
<div class="ab" style="left:1271px;top:205px;width:1px;height:1090px;background:#e2e2e2"></div>
<div class="ab" style="left:1492px;top:205px;width:1px;height:1090px;background:#e2e2e2"></div>
<div class="ab" style="left:1653px;top:205px;width:1px;height:1090px;background:#e2e2e2"></div>
<div class="ab" style="left:1754px;top:205px;width:1px;height:1090px;background:#e2e2e2"></div>
<div class="ab" style="left:1855px;top:205px;width:1px;height:1090px;background:#e2e2e2"></div>
<div class="ab" style="left:1956px;top:205px;width:1px;height:1090px;background:#e2e2e2"></div>
<div class="ab" style="left:2057px;top:205px;width:1px;height:1090px;background:#e2e2e2"></div>
<div class="ab" style="left:2158px;top:205px;width:1px;height:1090px;background:#e2e2e2"></div>
<div class="ab" style="left:2259px;top:205px;width:1px;height:1090px;background:#e2e2e2"></div>
<div class="ab" style="left:2360px;top:205px;width:1px;height:1090px;background:#e2e2e2"></div>
<div class="ab" style="left:2461px;top:205px;width:1px;height:1090px;background:#e2e2e2"></div>
<div class="ab" style="left:206px;top:205px;width:1px;height:20px;background:#dcd2e6"></div>
<div class="ab" style="left:407px;top:205px;width:1px;height:20px;background:#dcd2e6"></div>
<div class="ab" style="left:478px;top:205px;width:1px;height:20px;background:#dcd2e6"></div>
<div class="ab" style="left:574px;top:205px;width:1px;height:20px;background:#dcd2e6"></div>
<div class="ab" style="left:665px;top:205px;width:1px;height:20px;background:#dcd2e6"></div>
<div class="ab" style="left:741px;top:205px;width:1px;height:20px;background:#dcd2e6"></div>
<div class="ab" style="left:847px;top:205px;width:1px;height:20px;background:#dcd2e6"></div>
<div class="ab" style="left:938px;top:205px;width:1px;height:20px;background:#dcd2e6"></div>
<div class="ab" style="left:1039px;top:205px;width:1px;height:20px;background:#dcd2e6"></div>
<div class="ab" style="left:1170px;top:205px;width:1px;height:20px;background:#dcd2e6"></div>
<div class="ab" style="left:1271px;top:205px;width:1px;height:20px;background:#dcd2e6"></div>
<div class="ab" style="left:1492px;top:205px;width:1px;height:20px;background:#dcd2e6"></div>
<div class="ab" style="left:1653px;top:205px;width:1px;height:20px;background:#dcd2e6"></div>
<div class="ab" style="left:1754px;top:205px;width:1px;height:20px;background:#dcd2e6"></div>
<div class="ab" style="left:206px;top:247px;width:1px;height:20px;background:#dcd2e6"></div>
<div class="ab" style="left:407px;top:247px;width:1px;height:20px;background:#dcd2e6"></div>
<div class="ab" style="left:478px;top:247px;width:1px;height:20px;background:#dcd2e6"></div>
<div class="ab" style="left:574px;top:247px;width:1px;height:20px;background:#dcd2e6"></div>
<div class="ab" style="left:665px;top:247px;width:1px;height:20px;background:#dcd2e6"></div>
<div class="ab" style="left:741px;top:247px;width:1px;height:20px;background:#dcd2e6"></div>
<div class="ab" style="left:847px;top:247px;width:1px;height:20px;background:#dcd2e6"></div>
<div class="ab" style="left:938px;top:247px;width:1px;height:20px;background:#dcd2e6"></div>
<div class="ab" style="left:1039px;top:247px;width:1px;height:20px;background:#dcd2e6"></div>
<div class="ab" style="left:1170px;top:247px;width:1px;height:20px;background:#dcd2e6"></div>
<div class="ab" style="left:1271px;top:247px;width:1px;height:20px;background:#dcd2e6"></div>
<div class="ab" style="left:1492px;top:247px;width:1px;height:20px;background:#dcd2e6"></div>
<div class="ab" style="left:1653px;top:247px;width:1px;height:20px;background:#dcd2e6"></div>
<div class="ab" style="left:1754px;top:247px;width:1px;height:20px;background:#dcd2e6"></div>
<div class="ab" style="left:206px;top:289px;width:1px;height:20px;background:#dcd2e6"></div>
<div class="ab" style="left:407px;top:289px;width:1px;height:20px;background:#dcd2e6"></div>
<div class="ab" style="left:478px;top:289px;width:1px;height:20px;background:#dcd2e6"></div>
<div class="ab" style="left:574px;top:289px;width:1px;height:20px;background:#dcd2e6"></div>
<div class="ab" style="left:665px;top:289px;width:1px;height:20px;background:#dcd2e6"></div>
<div class="ab" style="left:741px;top:289px;width:1px;height:20px;background:#dcd2e6"></div>
<div class="ab" style="left:847px;top:289px;width:1px;height:20px;background:#dcd2e6"></div>
<div class="ab" style="left:938px;top:289px;width:1px;height:20px;background:#dcd2e6"></div>
<div class="ab" style="left:1039px;top:289px;width:1px;height:20px;background:#dcd2e6"></div>
<div class="ab" style="left:1170px;top:289px;width:1px;height:20px;background:#dcd2e6"></div>
<div class="ab" style="left:1271px;top:289px;width:1px;height:20px;background:#dcd2e6"></div>
<div class="ab" style="left:1492px;top:289px;width:1px;height:20px;background:#dcd2e6"></div>
<div class="ab" style="left:1653px;top:289px;width:1px;height:20px;background:#dcd2e6"></div>
<div class="ab" style="left:1754px;top:289px;width:1px;height:20px;background:#dcd2e6"></div>
<div class="ab" style="left:206px;top:331px;width:1px;height:20px;background:#dcd2e6"></div>
<div class="ab" style="left:407px;top:331px;width:1px;height:20px;background:#dcd2e6"></div>
<div class="ab" style="left:478px;top:331px;width:1px;height:20px;background:#dcd2e6"></div>
<div class="ab" style="left:574px;top:331px;width:1px;height:20px;background:#dcd2e6"></div>
<div class="ab" style="left:665px;top:331px;width:1px;height:20px;background:#dcd2e6"></div>
<div class="ab" style="left:741px;top:331px;width:1px;height:20px;background:#dcd2e6"></div>
<div class="ab" style="left:847px;top:331px;width:1px;height:20px;background:#dcd2e6"></div>
<div class="ab" style="left:938px;top:331px;width:1px;height:20px;background:#dcd2e6"></div>
<div class="ab" style="left:1039px;top:331px;width:1px;height:20px;background:#dcd2e6"></div>
<div class="ab" style="left:1170px;top:331px;width:1px;height:20px;background:#dcd2e6"></div>
<div class="ab" style="left:1271px;top:331px;width:1px;height:20px;background:#dcd2e6"></div>
<div class="ab" style="left:1492px;top:331px;width:1px;height:20px;background:#dcd2e6"></div>
<div class="ab" style="left:1653px;top:331px;width:1px;height:20px;background:#dcd2e6"></div>
<div class="ab" style="left:1754px;top:331px;width:1px;height:20px;background:#dcd2e6"></div>
<div class="ab" style="left:206px;top:373px;width:1px;height:20px;background:#dcd2e6"></div>
<div class="ab" style="left:407px;top:373px;width:1px;height:20px;background:#dcd2e6"></div>
<div class="ab" style="left:478px;top:373px;width:1px;height:20px;background:#dcd2e6"></div>
<div class="ab" style="left:574px;top:373px;width:1px;height:20px;background:#dcd2e6"></div>
<div class="ab" style="left:665px;top:373px;width:1px;height:20px;background:#dcd2e6"></div>
<div class="ab" style="left:741px;top:373px;width:1px;height:20px;background:#dcd2e6"></div>
<div class="ab" style="left:847px;top:373px;width:1px;height:20px;background:#dcd2e6"></div>
<div class="ab" style="left:938px;top:373px;width:1px;height:20px;background:#dcd2e6"></div>
<div class="ab" style="left:1039px;top:373px;width:1px;height:20px;background:#dcd2e6"></div>
<div class="ab" style="left:1170px;top:373px;width:1px;height:20px;background:#dcd2e6"></div>
<div class="ab" style="left:1271px;top:373px;width:1px;height:20px;background:#dcd2e6"></div>
<div class="ab" style="left:1492px;top:373px;width:1px;height:20px;background:#dcd2e6"></div>
<div class="ab" style="left:1653px;top:373px;width:1px;height:20px;background:#dcd2e6"></div>
<div class="ab" style="left:1754px;top:373px;width:1px;height:20px;background:#dcd2e6"></div>
<div class="ab" style="left:206px;top:415px;width:1px;height:20px;background:#dcd2e6"></div>
<div class="ab" style="left:407px;top:415px;width:1px;height:20px;background:#dcd2e6"></div>
<div class="ab" style="left:478px;top:415px;width:1px;height:20px;background:#dcd2e6"></div>
<div class="ab" style="left:574px;top:415px;width:1px;height:20px;background:#dcd2e6"></div>
<div class="ab" style="left:665px;top:415px;width:1px;height:20px;background:#dcd2e6"></div>
<div class="ab" style="left:741px;top:415px;width:1px;height:20px;background:#dcd2e6"></div>
<div class="ab" style="left:847px;top:415px;width:1px;height:20px;background:#dcd2e6"></div>
<div class="ab" style="left:938px;top:415px;width:1px;height:20px;background:#dcd2e6"></div>
<div class="ab" style="left:1039px;top:415px;width:1px;height:20px;background:#dcd2e6"></div>
<div class="ab" style="left:1170px;top:415px;width:1px;height:20px;background:#dcd2e6"></div>
<div class="ab" style="left:1271px;top:415px;width:1px;height:20px;background:#dcd2e6"></div>
<div class="ab" style="left:1492px;top:415px;width:1px;height:20px;background:#dcd2e6"></div>
<div class="ab" style="left:1653px;top:415px;width:1px;height:20px;background:#dcd2e6"></div>
<div class="ab" style="left:1754px;top:415px;width:1px;height:20px;background:#dcd2e6"></div>
<div class="ab" style="left:206px;top:457px;width:1px;height:20px;background:#dcd2e6"></div>
<div class="ab" style="left:407px;top:457px;width:1px;height:20px;background:#dcd2e6"></div>
<div class="ab" style="left:478px;top:457px;width:1px;height:20px;background:#dcd2e6"></div>
<div class="ab" style="left:574px;top:457px;width:1px;height:20px;background:#dcd2e6"></div>
<div class="ab" style="left:665px;top:457px;width:1px;height:20px;background:#dcd2e6"></div>
<div class="ab" style="left:741px;top:457px;width:1px;height:20px;background:#dcd2e6"></div>
<div class="ab" style="left:847px;top:457px;width:1px;height:20px;background:#dcd2e6"></div>
<div class="ab" style="left:938px;top:457px;width:1px;height:20px;background:#dcd2e6"></div>
<div class="ab" style="left:1039px;top:457px;width:1px;height:20px;background:#dcd2e6"></div>
<div class="ab" style="left:1170px;top:457px;width:1px;height:20px;background:#dcd2e6"></div>
<div class="ab" style="left:1271px;top:457px;width:1px;height:20px;background:#dcd2e6"></div>
<div class="ab" style="left:1492px;top:457px;width:1px;height:20px;background:#dcd2e6"></div>
<div class="ab" style="left:1653px;top:457px;width:1px;height:20px;background:#dcd2e6"></div>
<div class="ab" style="left:1754px;top:457px;width:1px;height:20px;background:#dcd2e6"></div>
<div class="ab" style="left:206px;top:499px;width:1px;height:20px;background:#dcd2e6"></div>
<div class="ab" style="left:407px;top:499px;width:1px;height:20px;background:#dcd2e6"></div>
<div class="ab" style="left:478px;top:499px;width:1px;height:20px;background:#dcd2e6"></div>
<div class="ab" style="left:574px;top:499px;width:1px;height:20px;background:#dcd2e6"></div>
<div class="ab" style="left:665px;top:499px;width:1px;height:20px;background:#dcd2e6"></div>
<div class="ab" style="left:741px;top:499px;width:1px;height:20px;background:#dcd2e6"></div>
<div class="ab" style="left:847px;top:499px;width:1px;height:20px;background:#dcd2e6"></div>
<div class="ab" style="left:938px;top:499px;width:1px;height:20px;background:#dcd2e6"></div>
<div class="ab" style="left:1039px;top:499px;width:1px;height:20px;background:#dcd2e6"></div>
<div class="ab" style="left:1170px;top:499px;width:1px;height:20px;background:#dcd2e6"></div>
<div class="ab" style="left:1271px;top:499px;width:1px;height:20px;background:#dcd2e6"></div>
<div class="ab" style="left:1492px;top:499px;width:1px;height:20px;background:#dcd2e6"></div>
<div class="ab" style="left:1653px;top:499px;width:1px;height:20px;background:#dcd2e6"></div>
<div class="ab" style="left:1754px;top:499px;width:1px;height:20px;background:#dcd2e6"></div>
<div class="ab" style="left:206px;top:541px;width:1px;height:20px;background:#dcd2e6"></div>
<div class="ab" style="left:407px;top:541px;width:1px;height:20px;background:#dcd2e6"></div>
<div class="ab" style="left:478px;top:541px;width:1px;height:20px;background:#dcd2e6"></div>
<div class="ab" style="left:574px;top:541px;width:1px;height:20px;background:#dcd2e6"></div>
<div class="ab" style="left:665px;top:541px;width:1px;height:20px;background:#dcd2e6"></div>
<div class="ab" style="left:741px;top:541px;width:1px;height:20px;background:#dcd2e6"></div>
<div class="ab" style="left:847px;top:541px;width:1px;height:20px;background:#dcd2e6"></div>
<div class="ab" style="left:938px;top:541px;width:1px;height:20px;background:#dcd2e6"></div>
<div class="ab" style="left:1039px;top:541px;width:1px;height:20px;background:#dcd2e6"></div>
<div class="ab" style="left:1170px;top:541px;width:1px;height:20px;background:#dcd2e6"></div>
<div class="ab" style="left:1271px;top:541px;width:1px;height:20px;background:#dcd2e6"></div>
<div class="ab" style="left:1492px;top:541px;width:1px;height:20px;background:#dcd2e6"></div>
<div class="ab" style="left:1653px;top:541px;width:1px;height:20px;background:#dcd2e6"></div>
<div class="ab" style="left:1754px;top:541px;width:1px;height:20px;background:#dcd2e6"></div>
<div class="ab" style="left:206px;top:583px;width:1px;height:20px;background:#dcd2e6"></div>
<div class="ab" style="left:407px;top:583px;width:1px;height:20px;background:#dcd2e6"></div>
<div class="ab" style="left:478px;top:583px;width:1px;height:20px;background:#dcd2e6"></div>
<div class="ab" style="left:574px;top:583px;width:1px;height:20px;background:#dcd2e6"></div>
<div class="ab" style="left:665px;top:583px;width:1px;height:20px;background:#dcd2e6"></div>
<div class="ab" style="left:741px;top:583px;width:1px;height:20px;background:#dcd2e6"></div>
<div class="ab" style="left:847px;top:583px;width:1px;height:20px;background:#dcd2e6"></div>
<div class="ab" style="left:938px;top:583px;width:1px;height:20px;background:#dcd2e6"></div>
<div class="ab" style="left:1039px;top:583px;width:1px;height:20px;background:#dcd2e6"></div>
<div class="ab" style="left:1170px;top:583px;width:1px;height:20px;background:#dcd2e6"></div>
<div class="ab" style="left:1271px;top:583px;width:1px;height:20px;background:#dcd2e6"></div>
<div class="ab" style="left:1492px;top:583px;width:1px;height:20px;background:#dcd2e6"></div>
<div class="ab" style="left:1653px;top:583px;width:1px;height:20px;background:#dcd2e6"></div>
<div class="ab" style="left:1754px;top:583px;width:1px;height:20px;background:#dcd2e6"></div>
<div class="ab" style="left:206px;top:625px;width:1px;height:20px;background:#dcd2e6"></div>
<div class="ab" style="left:407px;top:625px;width:1px;height:20px;background:#dcd2e6"></div>
<div class="ab" style="left:478px;top:625px;width:1px;height:20px;background:#dcd2e6"></div>
<div class="ab" style="left:574px;top:625px;width:1px;height:20px;background:#dcd2e6"></div>
<div class="ab" style="left:665px;top:625px;width:1px;height:20px;background:#dcd2e6"></div>
<div class="ab" style="left:741px;top:625px;width:1px;height:20px;background:#dcd2e6"></div>
<div class="ab" style="left:847px;top:625px;width:1px;height:20px;background:#dcd2e6"></div>
<div class="ab" style="left:938px;top:625px;width:1px;height:20px;background:#dcd2e6"></div>
<div class="ab" style="left:1039px;top:625px;width:1px;height:20px;background:#dcd2e6"></div>
<div class="ab" style="left:1170px;top:625px;width:1px;height:20px;background:#dcd2e6"></div>
<div class="ab" style="left:1271px;top:625px;width:1px;height:20px;background:#dcd2e6"></div>
<div class="ab" style="left:1492px;top:625px;width:1px;height:20px;background:#dcd2e6"></div>
<div class="ab" style="left:1653px;top:625px;width:1px;height:20px;background:#dcd2e6"></div>
<div class="ab" style="left:1754px;top:625px;width:1px;height:20px;background:#dcd2e6"></div>
<div class="ab" style="left:206px;top:667px;width:1px;height:20px;background:#dcd2e6"></div>
<div class="ab" style="left:407px;top:667px;width:1px;height:20px;background:#dcd2e6"></div>
<div class="ab" style="left:478px;top:667px;width:1px;height:20px;background:#dcd2e6"></div>
<div class="ab" style="left:574px;top:667px;width:1px;height:20px;background:#dcd2e6"></div>
<div class="ab" style="left:665px;top:667px;width:1px;height:20px;background:#dcd2e6"></div>
<div class="ab" style="left:741px;top:667px;width:1px;height:20px;background:#dcd2e6"></div>
<div class="ab" style="left:847px;top:667px;width:1px;height:20px;background:#dcd2e6"></div>
<div class="ab" style="left:938px;top:667px;width:1px;height:20px;background:#dcd2e6"></div>
<div class="ab" style="left:1039px;top:667px;width:1px;height:20px;background:#dcd2e6"></div>
<div class="ab" style="left:1170px;top:667px;width:1px;height:20px;background:#dcd2e6"></div>
<div class="ab" style="left:1271px;top:667px;width:1px;height:20px;background:#dcd2e6"></div>
<div class="ab" style="left:1492px;top:667px;width:1px;height:20px;background:#dcd2e6"></div>
<div class="ab" style="left:1653px;top:667px;width:1px;height:20px;background:#dcd2e6"></div>
<div class="ab" style="left:1754px;top:667px;width:1px;height:20px;background:#dcd2e6"></div>
<div class="ab" style="left:206px;top:709px;width:1px;height:20px;background:#dcd2e6"></div>
<div class="ab" style="left:407px;top:709px;width:1px;height:20px;background:#dcd2e6"></div>
<div class="ab" style="left:478px;top:709px;width:1px;height:20px;background:#dcd2e6"></div>
<div class="ab" style="left:574px;top:709px;width:1px;height:20px;background:#dcd2e6"></div>
<div class="ab" style="left:665px;top:709px;width:1px;height:20px;background:#dcd2e6"></div>
<div class="ab" style="left:741px;top:709px;width:1px;height:20px;background:#dcd2e6"></div>
<div class="ab" style="left:847px;top:709px;width:1px;height:20px;background:#dcd2e6"></div>
<div class="ab" style="left:938px;top:709px;width:1px;height:20px;background:#dcd2e6"></div>
<div class="ab" style="left:1039px;top:709px;width:1px;height:20px;background:#dcd2e6"></div>
<div class="ab" style="left:1170px;top:709px;width:1px;height:20px;background:#dcd2e6"></div>
<div class="ab" style="left:1271px;top:709px;width:1px;height:20px;background:#dcd2e6"></div>
<div class="ab" style="left:1492px;top:709px;width:1px;height:20px;background:#dcd2e6"></div>
<div class="ab" style="left:1653px;top:709px;width:1px;height:20px;background:#dcd2e6"></div>
<div class="ab" style="left:1754px;top:709px;width:1px;height:20px;background:#dcd2e6"></div>
<div class="ab" style="left:206px;top:751px;width:1px;height:20px;background:#dcd2e6"></div>
<div class="ab" style="left:407px;top:751px;width:1px;height:20px;background:#dcd2e6"></div>
<div class="ab" style="left:478px;top:751px;width:1px;height:20px;background:#dcd2e6"></div>
<div class="ab" style="left:574px;top:751px;width:1px;height:20px;background:#dcd2e6"></div>
<div class="ab" style="left:665px;top:751px;width:1px;height:20px;background:#dcd2e6"></div>
<div class="ab" style="left:741px;top:751px;width:1px;height:20px;background:#dcd2e6"></div>
<div class="ab" style="left:847px;top:751px;width:1px;height:20px;background:#dcd2e6"></div>
<div class="ab" style="left:938px;top:751px;width:1px;height:20px;background:#dcd2e6"></div>
<div class="ab" style="left:1039px;top:751px;width:1px;height:20px;background:#dcd2e6"></div>
<div class="ab" style="left:1170px;top:751px;width:1px;height:20px;background:#dcd2e6"></div>
<div class="ab" style="left:1271px;top:751px;width:1px;height:20px;background:#dcd2e6"></div>
<div class="ab" style="left:1492px;top:751px;width:1px;height:20px;background:#dcd2e6"></div>
<div class="ab" style="left:1653px;top:751px;width:1px;height:20px;background:#dcd2e6"></div>
<div class="ab" style="left:1754px;top:751px;width:1px;height:20px;background:#dcd2e6"></div>
<div class="ab" style="left:206px;top:793px;width:1px;height:20px;background:#dcd2e6"></div>
<div class="ab" style="left:407px;top:793px;width:1px;height:20px;background:#dcd2e6"></div>
<div class="ab" style="left:478px;top:793px;width:1px;height:20px;background:#dcd2e6"></div>
<div class="ab" style="left:574px;top:793px;width:1px;height:20px;background:#dcd2e6"></div>
<div class="ab" style="left:665px;top:793px;width:1px;height:20px;background:#dcd2e6"></div>
<div class="ab" style="left:741px;top:793px;width:1px;height:20px;background:#dcd2e6"></div>
<div class="ab" style="left:847px;top:793px;width:1px;height:20px;background:#dcd2e6"></div>
<div class="ab" style="left:938px;top:793px;width:1px;height:20px;background:#dcd2e6"></div>
<div class="ab" style="left:1039px;top:793px;width:1px;height:20px;background:#dcd2e6"></div>
<div class="ab" style="left:1170px;top:793px;width:1px;height:20px;background:#dcd2e6"></div>
<div class="ab" style="left:1271px;top:793px;width:1px;height:20px;background:#dcd2e6"></div>
<div class="ab" style="left:1492px;top:793px;width:1px;height:20px;background:#dcd2e6"></div>
<div class="ab" style="left:1653px;top:793px;width:1px;height:20px;background:#dcd2e6"></div>
<div class="ab" style="left:1754px;top:793px;width:1px;height:20px;background:#dcd2e6"></div>
<div class="ab" style="left:206px;top:835px;width:1px;height:20px;background:#dcd2e6"></div>
<div class="ab" style="left:407px;top:835px;width:1px;height:20px;background:#dcd2e6"></div>
<div class="ab" style="left:478px;top:835px;width:1px;height:20px;background:#dcd2e6"></div>
<div class="ab" style="left:574px;top:835px;width:1px;height:20px;background:#dcd2e6"></div>
<div class="ab" style="left:665px;top:835px;width:1px;height:20px;background:#dcd2e6"></div>
<div class="ab" style="left:741px;top:835px;width:1px;height:20px;background:#dcd2e6"></div>
<div class="ab" style="left:847px;top:835px;width:1px;height:20px;background:#dcd2e6"></div>
<div class="ab" style="left:938px;top:835px;width:1px;height:20px;background:#dcd2e6"></div>
<div class="ab" style="left:1039px;top:835px;width:1px;height:20px;background:#dcd2e6"></div>
<div class="ab" style="left:1170px;top:835px;width:1px;height:20px;background:#dcd2e6"></div>
<div class="ab" style="left:1271px;top:835px;width:1px;height:20px;background:#dcd2e6"></div>
<div class="ab" style="left:1492px;top:835px;width:1px;height:20px;background:#dcd2e6"></div>
<div class="ab" style="left:1653px;top:835px;width:1px;height:20px;background:#dcd2e6"></div>
<div class="ab" style="left:1754px;top:835px;width:1px;height:20px;background:#dcd2e6"></div>
<div class="ab" style="left:206px;top:877px;width:1px;height:20px;background:#dcd2e6"></div>
<div class="ab" style="left:407px;top:877px;width:1px;height:20px;background:#dcd2e6"></div>
<div class="ab" style="left:478px;top:877px;width:1px;height:20px;background:#dcd2e6"></div>
<div class="ab" style="left:574px;top:877px;width:1px;height:20px;background:#dcd2e6"></div>
<div class="ab" style="left:665px;top:877px;width:1px;height:20px;background:#dcd2e6"></div>
<div class="ab" style="left:741px;top:877px;width:1px;height:20px;background:#dcd2e6"></div>
<div class="ab" style="left:847px;top:877px;width:1px;height:20px;background:#dcd2e6"></div>
<div class="ab" style="left:938px;top:877px;width:1px;height:20px;background:#dcd2e6"></div>
<div class="ab" style="left:1039px;top:877px;width:1px;height:20px;background:#dcd2e6"></div>
<div class="ab" style="left:1170px;top:877px;width:1px;height:20px;background:#dcd2e6"></div>
<div class="ab" style="left:1271px;top:877px;width:1px;height:20px;background:#dcd2e6"></div>
<div class="ab" style="left:1492px;top:877px;width:1px;height:20px;background:#dcd2e6"></div>
<div class="ab" style="left:1653px;top:877px;width:1px;height:20px;background:#dcd2e6"></div>
<div class="ab" style="left:1754px;top:877px;width:1px;height:20px;background:#dcd2e6"></div>
<div class="ab" style="left:206px;top:919px;width:1px;height:20px;background:#dcd2e6"></div>
<div class="ab" style="left:407px;top:919px;width:1px;height:20px;background:#dcd2e6"></div>
<div class="ab" style="left:478px;top:919px;width:1px;height:20px;background:#dcd2e6"></div>
<div class="ab" style="left:574px;top:919px;width:1px;height:20px;background:#dcd2e6"></div>
<div class="ab" style="left:665px;top:919px;width:1px;height:20px;background:#dcd2e6"></div>
<div class="ab" style="left:741px;top:919px;width:1px;height:20px;background:#dcd2e6"></div>
<div class="ab" style="left:847px;top:919px;width:1px;height:20px;background:#dcd2e6"></div>
<div class="ab" style="left:938px;top:919px;width:1px;height:20px;background:#dcd2e6"></div>
<div class="ab" style="left:1039px;top:919px;width:1px;height:20px;background:#dcd2e6"></div>
<div class="ab" style="left:1170px;top:919px;width:1px;height:20px;background:#dcd2e6"></div>
<div class="ab" style="left:1271px;top:919px;width:1px;height:20px;background:#dcd2e6"></div>
<div class="ab" style="left:1492px;top:919px;width:1px;height:20px;background:#dcd2e6"></div>
<div class="ab" style="left:1653px;top:919px;width:1px;height:20px;background:#dcd2e6"></div>
<div class="ab" style="left:1754px;top:919px;width:1px;height:20px;background:#dcd2e6"></div>
<div class="ab" style="left:206px;top:961px;width:1px;height:20px;background:#dcd2e6"></div>
<div class="ab" style="left:407px;top:961px;width:1px;height:20px;background:#dcd2e6"></div>
<div class="ab" style="left:478px;top:961px;width:1px;height:20px;background:#dcd2e6"></div>
<div class="ab" style="left:574px;top:961px;width:1px;height:20px;background:#dcd2e6"></div>
<div class="ab" style="left:665px;top:961px;width:1px;height:20px;background:#dcd2e6"></div>
<div class="ab" style="left:741px;top:961px;width:1px;height:20px;background:#dcd2e6"></div>
<div class="ab" style="left:847px;top:961px;width:1px;height:20px;background:#dcd2e6"></div>
<div class="ab" style="left:938px;top:961px;width:1px;height:20px;background:#dcd2e6"></div>
<div class="ab" style="left:1039px;top:961px;width:1px;height:20px;background:#dcd2e6"></div>
<div class="ab" style="left:1170px;top:961px;width:1px;height:20px;background:#dcd2e6"></div>
<div class="ab" style="left:1271px;top:961px;width:1px;height:20px;background:#dcd2e6"></div>
<div class="ab" style="left:1492px;top:961px;width:1px;height:20px;background:#dcd2e6"></div>
<div class="ab" style="left:1653px;top:961px;width:1px;height:20px;background:#dcd2e6"></div>
<div class="ab" style="left:1754px;top:961px;width:1px;height:20px;background:#dcd2e6"></div>
<div class="ab" style="left:206px;top:1003px;width:1px;height:20px;background:#dcd2e6"></div>
<div class="ab" style="left:407px;top:1003px;width:1px;height:20px;background:#dcd2e6"></div>
<div class="ab" style="left:478px;top:1003px;width:1px;height:20px;background:#dcd2e6"></div>
<div class="ab" style="left:574px;top:1003px;width:1px;height:20px;background:#dcd2e6"></div>
<div class="ab" style="left:665px;top:1003px;width:1px;height:20px;background:#dcd2e6"></div>
<div class="ab" style="left:741px;top:1003px;width:1px;height:20px;background:#dcd2e6"></div>
<div class="ab" style="left:847px;top:1003px;width:1px;height:20px;background:#dcd2e6"></div>
<div class="ab" style="left:938px;top:1003px;width:1px;height:20px;background:#dcd2e6"></div>
<div class="ab" style="left:1039px;top:1003px;width:1px;height:20px;background:#dcd2e6"></div>
<div class="ab" style="left:1170px;top:1003px;width:1px;height:20px;background:#dcd2e6"></div>
<div class="ab" style="left:1271px;top:1003px;width:1px;height:20px;background:#dcd2e6"></div>
<div class="ab" style="left:1492px;top:1003px;width:1px;height:20px;background:#dcd2e6"></div>
<div class="ab" style="left:1653px;top:1003px;width:1px;height:20px;background:#dcd2e6"></div>
<div class="ab" style="left:1754px;top:1003px;width:1px;height:20px;background:#dcd2e6"></div>
<div class="ab" style="left:206px;top:1045px;width:1px;height:20px;background:#dcd2e6"></div>
<div class="ab" style="left:407px;top:1045px;width:1px;height:20px;background:#dcd2e6"></div>
<div class="ab" style="left:478px;top:1045px;width:1px;height:20px;background:#dcd2e6"></div>
<div class="ab" style="left:574px;top:1045px;width:1px;height:20px;background:#dcd2e6"></div>
<div class="ab" style="left:665px;top:1045px;width:1px;height:20px;background:#dcd2e6"></div>
<div class="ab" style="left:741px;top:1045px;width:1px;height:20px;background:#dcd2e6"></div>
<div class="ab" style="left:847px;top:1045px;width:1px;height:20px;background:#dcd2e6"></div>
<div class="ab" style="left:938px;top:1045px;width:1px;height:20px;background:#dcd2e6"></div>
<div class="ab" style="left:1039px;top:1045px;width:1px;height:20px;background:#dcd2e6"></div>
<div class="ab" style="left:1170px;top:1045px;width:1px;height:20px;background:#dcd2e6"></div>
<div class="ab" style="left:1271px;top:1045px;width:1px;height:20px;background:#dcd2e6"></div>
<div class="ab" style="left:1492px;top:1045px;width:1px;height:20px;background:#dcd2e6"></div>
<div class="ab" style="left:1653px;top:1045px;width:1px;height:20px;background:#dcd2e6"></div>
<div class="ab" style="left:1754px;top:1045px;width:1px;height:20px;background:#dcd2e6"></div>
<div class="ab" style="left:206px;top:1087px;width:1px;height:20px;background:#dcd2e6"></div>
<div class="ab" style="left:407px;top:1087px;width:1px;height:20px;background:#dcd2e6"></div>
<div class="ab" style="left:478px;top:1087px;width:1px;height:20px;background:#dcd2e6"></div>
<div class="ab" style="left:574px;top:1087px;width:1px;height:20px;background:#dcd2e6"></div>
<div class="ab" style="left:665px;top:1087px;width:1px;height:20px;background:#dcd2e6"></div>
<div class="ab" style="left:741px;top:1087px;width:1px;height:20px;background:#dcd2e6"></div>
<div class="ab" style="left:847px;top:1087px;width:1px;height:20px;background:#dcd2e6"></div>
<div class="ab" style="left:938px;top:1087px;width:1px;height:20px;background:#dcd2e6"></div>
<div class="ab" style="left:1039px;top:1087px;width:1px;height:20px;background:#dcd2e6"></div>
<div class="ab" style="left:1170px;top:1087px;width:1px;height:20px;background:#dcd2e6"></div>
<div class="ab" style="left:1271px;top:1087px;width:1px;height:20px;background:#dcd2e6"></div>
<div class="ab" style="left:1492px;top:1087px;width:1px;height:20px;background:#dcd2e6"></div>
<div class="ab" style="left:1653px;top:1087px;width:1px;height:20px;background:#dcd2e6"></div>
<div class="ab" style="left:1754px;top:1087px;width:1px;height:20px;background:#dcd2e6"></div>
<div class="ab" style="left:206px;top:1129px;width:1px;height:20px;background:#dcd2e6"></div>
<div class="ab" style="left:407px;top:1129px;width:1px;height:20px;background:#dcd2e6"></div>
<div class="ab" style="left:478px;top:1129px;width:1px;height:20px;background:#dcd2e6"></div>
<div class="ab" style="left:574px;top:1129px;width:1px;height:20px;background:#dcd2e6"></div>
<div class="ab" style="left:665px;top:1129px;width:1px;height:20px;background:#dcd2e6"></div>
<div class="ab" style="left:741px;top:1129px;width:1px;height:20px;background:#dcd2e6"></div>
<div class="ab" style="left:847px;top:1129px;width:1px;height:20px;background:#dcd2e6"></div>
<div class="ab" style="left:938px;top:1129px;width:1px;height:20px;background:#dcd2e6"></div>
<div class="ab" style="left:1039px;top:1129px;width:1px;height:20px;background:#dcd2e6"></div>
<div class="ab" style="left:1170px;top:1129px;width:1px;height:20px;background:#dcd2e6"></div>
<div class="ab" style="left:1271px;top:1129px;width:1px;height:20px;background:#dcd2e6"></div>
<div class="ab" style="left:1492px;top:1129px;width:1px;height:20px;background:#dcd2e6"></div>
<div class="ab" style="left:1653px;top:1129px;width:1px;height:20px;background:#dcd2e6"></div>
<div class="ab" style="left:1754px;top:1129px;width:1px;height:20px;background:#dcd2e6"></div>
<div class="ab" style="left:206px;top:1171px;width:1px;height:20px;background:#dcd2e6"></div>
<div class="ab" style="left:407px;top:1171px;width:1px;height:20px;background:#dcd2e6"></div>
<div class="ab" style="left:478px;top:1171px;width:1px;height:20px;background:#dcd2e6"></div>
<div class="ab" style="left:574px;top:1171px;width:1px;height:20px;background:#dcd2e6"></div>
<div class="ab" style="left:665px;top:1171px;width:1px;height:20px;background:#dcd2e6"></div>
<div class="ab" style="left:741px;top:1171px;width:1px;height:20px;background:#dcd2e6"></div>
<div class="ab" style="left:847px;top:1171px;width:1px;height:20px;background:#dcd2e6"></div>
<div class="ab" style="left:938px;top:1171px;width:1px;height:20px;background:#dcd2e6"></div>
<div class="ab" style="left:1039px;top:1171px;width:1px;height:20px;background:#dcd2e6"></div>
<div class="ab" style="left:1170px;top:1171px;width:1px;height:20px;background:#dcd2e6"></div>
<div class="ab" style="left:1271px;top:1171px;width:1px;height:20px;background:#dcd2e6"></div>
<div class="ab" style="left:1492px;top:1171px;width:1px;height:20px;background:#dcd2e6"></div>
<div class="ab" style="left:1653px;top:1171px;width:1px;height:20px;background:#dcd2e6"></div>
<div class="ab" style="left:1754px;top:1171px;width:1px;height:20px;background:#dcd2e6"></div>
<div class="ab" style="left:206px;top:1213px;width:1px;height:20px;background:#dcd2e6"></div>
<div class="ab" style="left:407px;top:1213px;width:1px;height:20px;background:#dcd2e6"></div>
<div class="ab" style="left:478px;top:1213px;width:1px;height:20px;background:#dcd2e6"></div>
<div class="ab" style="left:574px;top:1213px;width:1px;height:20px;background:#dcd2e6"></div>
<div class="ab" style="left:665px;top:1213px;width:1px;height:20px;background:#dcd2e6"></div>
<div class="ab" style="left:741px;top:1213px;width:1px;height:20px;background:#dcd2e6"></div>
<div class="ab" style="left:847px;top:1213px;width:1px;height:20px;background:#dcd2e6"></div>
<div class="ab" style="left:938px;top:1213px;width:1px;height:20px;background:#dcd2e6"></div>
<div class="ab" style="left:1039px;top:1213px;width:1px;height:20px;background:#dcd2e6"></div>
<div class="ab" style="left:1170px;top:1213px;width:1px;height:20px;background:#dcd2e6"></div>
<div class="ab" style="left:1271px;top:1213px;width:1px;height:20px;background:#dcd2e6"></div>
<div class="ab" style="left:1492px;top:1213px;width:1px;height:20px;background:#dcd2e6"></div>
<div class="ab" style="left:1653px;top:1213px;width:1px;height:20px;background:#dcd2e6"></div>
<div class="ab" style="left:1754px;top:1213px;width:1px;height:20px;background:#dcd2e6"></div>
<div class="ab" style="left:206px;top:1255px;width:1px;height:20px;background:#dcd2e6"></div>
<div class="ab" style="left:407px;top:1255px;width:1px;height:20px;background:#dcd2e6"></div>
<div class="ab" style="left:478px;top:1255px;width:1px;height:20px;background:#dcd2e6"></div>
<div class="ab" style="left:574px;top:1255px;width:1px;height:20px;background:#dcd2e6"></div>
<div class="ab" style="left:665px;top:1255px;width:1px;height:20px;background:#dcd2e6"></div>
<div class="ab" style="left:741px;top:1255px;width:1px;height:20px;background:#dcd2e6"></div>
<div class="ab" style="left:847px;top:1255px;width:1px;height:20px;background:#dcd2e6"></div>
<div class="ab" style="left:938px;top:1255px;width:1px;height:20px;background:#dcd2e6"></div>
<div class="ab" style="left:1039px;top:1255px;width:1px;height:20px;background:#dcd2e6"></div>
<div class="ab" style="left:1170px;top:1255px;width:1px;height:20px;background:#dcd2e6"></div>
<div class="ab" style="left:1271px;top:1255px;width:1px;height:20px;background:#dcd2e6"></div>
<div class="ab" style="left:1492px;top:1255px;width:1px;height:20px;background:#dcd2e6"></div>
<div class="ab" style="left:1653px;top:1255px;width:1px;height:20px;background:#dcd2e6"></div>
<div class="ab" style="left:1754px;top:1255px;width:1px;height:20px;background:#dcd2e6"></div>
<div class="ab" style="left:45px;top:141px;width:1px;height:1167px;background:#c4c7c5"></div>
<div class="ab" style="left:0;top:141px;width:2533px;height:1px;background:#c4c7c5"></div>
<div class="ab" style="left:0;top:165px;width:2533px;height:1px;background:#c4c7c5"></div>
<div class="ab" style="left:0;top:142px;width:41px;height:23px;background:#f8f9fa"></div>
<div class="ab" style="left:41px;top:142px;width:4px;height:23px;background:#c4c7c5"></div>
<div class="ab" style="left:46px;top:142px;width:160px;height:23px;background:#d3e3fd"></div>
<div class="ab" style="left:206px;top:142px;width:1px;height:23px;background:#c4c7c5"></div>
<div class="ch" style="left:46px;width:160px;font-weight:bold;color:#041e49">A</div>
<div class="ab" style="left:407px;top:142px;width:1px;height:23px;background:#c4c7c5"></div>
<div class="ch" style="left:207px;width:200px">B</div>
<div class="ab" style="left:478px;top:142px;width:1px;height:23px;background:#c4c7c5"></div>
<div class="ch" style="left:408px;width:70px">C</div>
<div class="ab" style="left:574px;top:142px;width:1px;height:23px;background:#c4c7c5"></div>
<div class="ch" style="left:479px;width:95px">D</div>
<div class="ab" style="left:665px;top:142px;width:1px;height:23px;background:#c4c7c5"></div>
<div class="ch" style="left:575px;width:90px">E</div>
<svg style="position:absolute;left:628px;top:145px;width:18px;height:18px" viewBox="0 0 24 24"><path fill="#444746" d="M7 10l5 5 5-5z" /></svg>
<div class="ab" style="left:741px;top:142px;width:1px;height:23px;background:#c4c7c5"></div>
<div class="ch" style="left:666px;width:75px">F</div>
<div class="ab" style="left:847px;top:142px;width:1px;height:23px;background:#c4c7c5"></div>
<div class="ch" style="left:742px;width:105px">G</div>
<div class="ab" style="left:938px;top:142px;width:1px;height:23px;background:#c4c7c5"></div>
<div class="ch" style="left:848px;width:90px">H</div>
<div class="ab" style="left:1039px;top:142px;width:1px;height:23px;background:#c4c7c5"></div>
<div class="ch" style="left:939px;width:100px">I</div>
<div class="ab" style="left:1170px;top:142px;width:1px;height:23px;background:#c4c7c5"></div>
<div class="ch" style="left:1040px;width:130px">J</div>
<div class="ab" style="left:1271px;top:142px;width:1px;height:23px;background:#c4c7c5"></div>
<div class="ch" style="left:1171px;width:100px">K</div>
<div class="ab" style="left:1492px;top:142px;width:1px;height:23px;background:#c4c7c5"></div>
<div class="ch" style="left:1272px;width:220px">L</div>
<div class="ab" style="left:1653px;top:142px;width:1px;height:23px;background:#c4c7c5"></div>
<div class="ch" style="left:1493px;width:160px">M</div>
<div class="ab" style="left:1754px;top:142px;width:1px;height:23px;background:#c4c7c5"></div>
<div class="ch" style="left:1654px;width:100px">N</div>
<div class="ab" style="left:1855px;top:142px;width:1px;height:23px;background:#c4c7c5"></div>
<div class="ch" style="left:1755px;width:100px">O</div>
<div class="ab" style="left:1956px;top:142px;width:1px;height:23px;background:#c4c7c5"></div>
<div class="ch" style="left:1856px;width:100px">P</div>
<div class="ab" style="left:2057px;top:142px;width:1px;height:23px;background:#c4c7c5"></div>
<div class="ch" style="left:1957px;width:100px">Q</div>
<div class="ab" style="left:2158px;top:142px;width:1px;height:23px;background:#c4c7c5"></div>
<div class="ch" style="left:2058px;width:100px">R</div>
<div class="ab" style="left:2259px;top:142px;width:1px;height:23px;background:#c4c7c5"></div>
<div class="ch" style="left:2159px;width:100px">S</div>
<div class="ab" style="left:2360px;top:142px;width:1px;height:23px;background:#c4c7c5"></div>
<div class="ch" style="left:2260px;width:100px">T</div>
<div class="ab" style="left:2461px;top:142px;width:1px;height:23px;background:#c4c7c5"></div>
<div class="ch" style="left:2361px;width:100px">U</div>
<div class="ch" style="left:2462px;width:100px">V</div>
<div class="ab" style="left:0;top:166px;width:45px;height:35px;background:#d3e3fd"></div>
<div class="rn" style="top:166px;height:34px;line-height:33.6px;font-weight:bold;color:#041e49">1</div>
<div class="ab" style="left:46px;top:166px;width:1708px;height:35px;background:#8339b5"></div>
<div class="ab" style="left:46px;top:200px;width:1708px;height:1px;background:#6a1fb0"></div>
<div class="hd" style="left:46px;width:160px"><div style="position:absolute;left:50%;top:0;transform:translateX(-50%);white-space:nowrap">Username</div></div>
<div class="ab" style="left:206px;top:166px;width:1px;height:34px;background:#7531ac"></div>
<div class="hd" style="left:207px;width:200px"><div style="position:absolute;left:50%;top:0;transform:translateX(-50%);white-space:nowrap">Full Name</div></div>
<div class="ab" style="left:407px;top:166px;width:1px;height:34px;background:#7531ac"></div>
<div class="hd" style="left:408px;width:70px"><div style="position:absolute;left:50%;top:0;transform:translateX(-50%);white-space:nowrap">Bio</div></div>
<div class="ab" style="left:478px;top:166px;width:1px;height:34px;background:#7531ac"></div>
<div class="hd" style="left:479px;width:95px"><div style="position:absolute;left:50%;top:0;transform:translateX(-50%);white-space:nowrap">Followers</div></div>
<div class="ab" style="left:574px;top:166px;width:1px;height:34px;background:#7531ac"></div>
<div class="hd" style="left:575px;width:90px"><div style="position:absolute;left:50%;top:0;transform:translateX(-50%);white-space:nowrap">Following</div></div>
<div class="ab" style="left:665px;top:166px;width:1px;height:34px;background:#7531ac"></div>
<div class="hd" style="left:666px;width:75px"><div style="position:absolute;left:50%;top:0;transform:translateX(-50%);white-space:nowrap">Posts</div></div>
<div class="ab" style="left:741px;top:166px;width:1px;height:34px;background:#7531ac"></div>
<div class="hd" style="left:742px;width:105px"><div style="position:absolute;left:50%;top:0;transform:translateX(-50%);white-space:nowrap">Verified</div></div>
<div class="ab" style="left:847px;top:166px;width:1px;height:34px;background:#7531ac"></div>
<div class="hd" style="left:848px;width:90px"><div style="position:absolute;left:50%;top:0;transform:translateX(-50%);white-space:nowrap">Business</div></div>
<div class="ab" style="left:938px;top:166px;width:1px;height:34px;background:#7531ac"></div>
<div class="hd" style="left:939px;width:100px"><div style="position:absolute;left:50%;top:0;transform:translateX(-50%);white-space:nowrap">Category</div></div>
<div class="ab" style="left:1039px;top:166px;width:1px;height:34px;background:#7531ac"></div>
<div class="hd" style="left:1040px;width:130px"><div style="position:absolute;left:50%;top:0;transform:translateX(-50%);white-space:nowrap">Website</div></div>
<div class="ab" style="left:1170px;top:166px;width:1px;height:34px;background:#7531ac"></div>
<div class="hd" style="left:1171px;width:100px"><div style="position:absolute;left:50%;top:0;transform:translateX(-50%);white-space:nowrap">Engagement %</div></div>
<div class="ab" style="left:1271px;top:166px;width:1px;height:34px;background:#7531ac"></div>
<div class="hd" style="left:1272px;width:220px"><div style="position:absolute;left:50%;top:0;transform:translateX(-50%);white-space:nowrap">Avg Likes</div></div>
<div class="ab" style="left:1492px;top:166px;width:1px;height:34px;background:#7531ac"></div>
<div class="hd" style="left:1493px;width:160px"><div style="position:absolute;left:50%;top:0;transform:translateX(-50%);white-space:nowrap">Avg Comments</div></div>
<div class="ab" style="left:1653px;top:166px;width:1px;height:34px;background:#7531ac"></div>
<div class="hd" style="left:1654px;width:100px"><div style="position:absolute;left:50%;top:0;transform:translateX(-50%);white-space:nowrap">Scraped</div></div>
<div class="ab" style="left:1855px;top:166px;width:1px;height:35px;background:#e2e2e2"></div>
<div class="ab" style="left:1956px;top:166px;width:1px;height:35px;background:#e2e2e2"></div>
<div class="ab" style="left:2057px;top:166px;width:1px;height:35px;background:#e2e2e2"></div>
<div class="ab" style="left:2158px;top:166px;width:1px;height:35px;background:#e2e2e2"></div>
<div class="ab" style="left:2259px;top:166px;width:1px;height:35px;background:#e2e2e2"></div>
<div class="ab" style="left:2360px;top:166px;width:1px;height:35px;background:#e2e2e2"></div>
<div class="ab" style="left:2461px;top:166px;width:1px;height:35px;background:#e2e2e2"></div>
<div class="ab" style="left:1754px;top:166px;width:1px;height:35px;background:repeating-linear-gradient(to bottom,#6b2fb3 0 2px,#ffffff 2px 4px)"></div>
<div class="ab" style="left:0;top:201px;width:2533px;height:4px;background:#c6c6c6"></div>
<div class="rn" style="top:205px">2</div>
<div class="c l" style="left:46px;top:205px;width:160px">nightsky.captures</div>
<div class="c l" style="left:207px;top:205px;width:200px">Remy Nguyen</div>
<div class="c" style="left:408px;top:205px;width:70px"><div style="position:absolute;left:50%;transform:translateX(-50%);white-space:nowrap">ston | Portra</div></div>
<div class="c m" style="left:479px;top:205px;width:95px">1,239,908</div>
<div class="c m" style="left:575px;top:205px;width:90px">3,054</div>
<div class="c m" style="left:666px;top:205px;width:75px">2,354</div>
<div class="c m" style="left:742px;top:205px;width:105px">FALSE</div>
<div class="c m" style="left:848px;top:205px;width:90px">TRUE</div>
<div class="c m" style="left:939px;top:205px;width:100px">Photography</div>
<div class="c m" style="left:1171px;top:205px;width:100px">0.86</div>
<div class="c r" style="left:1272px;top:205px;width:220px">7464</div>
<div class="c r" style="left:1493px;top:205px;width:160px">379</div>
<div class="c r" style="left:1654px;top:205px;width:100px">2026-02-18</div>
<div class="rn" style="top:226px">3</div>
<div class="c l" style="left:46px;top:226px;width:160px">coastline.chaser</div>
<div class="c l" style="left:207px;top:226px;width:200px">Chloe Torres</div>
<div class="c" style="left:408px;top:226px;width:70px"><div style="position:absolute;left:50%;transform:translateX(-50%);white-space:nowrap">he world | Ti</div></div>
<div class="c m" style="left:479px;top:226px;width:95px">1,237,691</div>
<div class="c m" style="left:575px;top:226px;width:90px">4,509</div>
<div class="c m" style="left:666px;top:226px;width:75px">2,670</div>
<div class="c m" style="left:742px;top:226px;width:105px">FALSE</div>
<div class="c m" style="left:848px;top:226px;width:90px">FALSE</div>
<div class="c m" style="left:939px;top:226px;width:100px">Travel</div>
<div class="ab" style="left:1040px;top:242px;width:130px;height:1px;background:#2b63cf"></div>
<div class="c" style="left:1040px;top:226px;width:130px"><div style="position:absolute;left:50%;transform:translateX(-50%);white-space:nowrap"><span class="lk">s://linktr.ee/coastlinech</span></div></div>
<div class="c m" style="left:1171px;top:226px;width:100px">0.95</div>
<div class="c r" style="left:1272px;top:226px;width:220px">8230</div>
<div class="c r" style="left:1493px;top:226px;width:160px">407</div>
<div class="c r" style="left:1654px;top:226px;width:100px">2026-02-18</div>
<div class="rn" style="top:247px">4</div>
<div class="c l" style="left:46px;top:247px;width:160px">backpack.stories</div>
<div class="c l" style="left:207px;top:247px;width:200px">Camila Allen</div>
<div class="c" style="left:408px;top:247px;width:70px"><div style="position:absolute;left:50%;transform:translateX(-50%);white-space:nowrap">k from anyw</div></div>
<div class="c m" style="left:479px;top:247px;width:95px">1,117,056</div>
<div class="c m" style="left:575px;top:247px;width:90px">3,976</div>
<div class="c m" style="left:666px;top:247px;width:75px">2,374</div>
<div class="c m" style="left:742px;top:247px;width:105px">TRUE</div>
<div class="c m" style="left:848px;top:247px;width:90px">FALSE</div>
<div class="c m" style="left:939px;top:247px;width:100px">Travel</div>
<div class="ab" style="left:1040px;top:263px;width:130px;height:1px;background:#2b63cf"></div>
<div class="c" style="left:1040px;top:247px;width:130px"><div style="position:absolute;left:50%;transform:translateX(-50%);white-space:nowrap"><span class="lk">//www.backpackstories</span></div></div>
<div class="c m" style="left:1171px;top:247px;width:100px">0.83</div>
<div class="c r" style="left:1272px;top:247px;width:220px">6490</div>
<div class="c r" style="left:1493px;top:247px;width:160px">419</div>
<div class="c r" style="left:1654px;top:247px;width:100px">2026-02-18</div>
<div class="rn" style="top:268px">5</div>
<div class="c l" style="left:46px;top:268px;width:160px"><span class="lk">organic.glow.co</span></div>
<div class="c l" style="left:207px;top:268px;width:200px">Sarah Martin</div>
<div class="c" style="left:408px;top:268px;width:70px"><div style="position:absolute;left:50%;transform:translateX(-50%);white-space:nowrap">er | DM for a</div></div>
<div class="c m" style="left:479px;top:268px;width:95px">431,992</div>
<div class="c m" style="left:575px;top:268px;width:90px">1,309</div>
<div class="c m" style="left:666px;top:268px;width:75px">621</div>
<div class="c m" style="left:742px;top:268px;width:105px">FALSE</div>
<div class="c m" style="left:848px;top:268px;width:90px">TRUE</div>
<div class="c m" style="left:939px;top:268px;width:100px">Beauty</div>
<div class="c m" style="left:1171px;top:268px;width:100px">1.79</div>
<div class="c r" style="left:1272px;top:268px;width:220px">5412</div>
<div class="c r" style="left:1493px;top:268px;width:160px">300</div>
<div class="c r" style="left:1654px;top:268px;width:100px">2026-02-18</div>
<div class="rn" style="top:289px">6</div>
<div class="c l" style="left:46px;top:289px;width:160px">sneakerhead.jay</div>
<div class="c l" style="left:207px;top:289px;width:200px">Chloe Stone</div>
<div class="c" style="left:408px;top:289px;width:70px"><div style="position:absolute;left:50%;transform:translateX(-50%);white-space:nowrap">n advocate |</div></div>
<div class="c m" style="left:479px;top:289px;width:95px">430,313</div>
<div class="c m" style="left:575px;top:289px;width:90px">4,624</div>
<div class="c m" style="left:666px;top:289px;width:75px">581</div>
<div class="c m" style="left:742px;top:289px;width:105px">TRUE</div>
<div class="c m" style="left:848px;top:289px;width:90px">FALSE</div>
<div class="c m" style="left:939px;top:289px;width:100px">Fashion</div>
<div class="ab" style="left:1040px;top:305px;width:130px;height:1px;background:#2b63cf"></div>
<div class="c" style="left:1040px;top:289px;width:130px"><div style="position:absolute;left:50%;transform:translateX(-50%);white-space:nowrap"><span class="lk">s://linktr.ee/sneakerhea</span></div></div>
<div class="c m" style="left:1171px;top:289px;width:100px">3.02</div>
<div class="c r" style="left:1272px;top:289px;width:220px">9096</div>
<div class="c r" style="left:1493px;top:289px;width:160px">381</div>
<div class="c r" style="left:1654px;top:289px;width:100px">2026-02-18</div>
<div class="rn" style="top:310px">7</div>
<div class="c l" style="left:46px;top:310px;width:160px"><span class="lk">droneview.pro</span></div>
<div class="c l" style="left:207px;top:310px;width:200px">Finn Rivera</div>
<div class="c" style="left:408px;top:310px;width:70px"><div style="position:absolute;left:50%;transform:translateX(-50%);white-space:nowrap">er | Barcelo</div></div>
<div class="c m" style="left:479px;top:310px;width:95px">226,419</div>
<div class="c m" style="left:575px;top:310px;width:90px">2,823</div>
<div class="c m" style="left:666px;top:310px;width:75px">381</div>
<div class="c m" style="left:742px;top:310px;width:105px">FALSE</div>
<div class="c m" style="left:848px;top:310px;width:90px">FALSE</div>
<div class="c m" style="left:939px;top:310px;width:100px">Photography</div>
<div class="ab" style="left:1040px;top:326px;width:130px;height:1px;background:#2b63cf"></div>
<div class="c" style="left:1040px;top:310px;width:130px"><div style="position:absolute;left:50%;transform:translateX(-50%);white-space:nowrap"><span class="lk">s://www.droneviewpro.</span></div></div>
<div class="c m" style="left:1171px;top:310px;width:100px">3.33</div>
<div class="c r" style="left:1272px;top:310px;width:220px">5277</div>
<div class="c r" style="left:1493px;top:310px;width:160px">324</div>
<div class="c r" style="left:1654px;top:310px;width:100px">2026-02-18</div>
<div class="rn" style="top:331px">8</div>
<div class="c l" style="left:46px;top:331px;width:160px">bokeh.masters</div>
<div class="c l" style="left:207px;top:331px;width:200px">Lina Campbell</div>
<div class="c" style="left:408px;top:331px;width:70px"><div style="position:absolute;left:50%;transform:translateX(-50%);white-space:nowrap">r | Aerial pe</div></div>
<div class="c m" style="left:479px;top:331px;width:95px">190,521</div>
<div class="c m" style="left:575px;top:331px;width:90px">2,718</div>
<div class="c m" style="left:666px;top:331px;width:75px">1,623</div>
<div class="c m" style="left:742px;top:331px;width:105px">FALSE</div>
<div class="c m" style="left:848px;top:331px;width:90px">FALSE</div>
<div class="c m" style="left:939px;top:331px;width:100px">Photography</div>
<div class="ab" style="left:1040px;top:347px;width:130px;height:1px;background:#2b63cf"></div>
<div class="c" style="left:1040px;top:331px;width:130px"><div style="position:absolute;left:50%;transform:translateX(-50%);white-space:nowrap"><span class="lk">s://linktr.ee/bokehmas</span></div></div>
<div class="c m" style="left:1171px;top:331px;width:100px">3.75</div>
<div class="c r" style="left:1272px;top:331px;width:220px">5001</div>
<div class="c r" style="left:1493px;top:331px;width:160px">261</div>
<div class="c r" style="left:1654px;top:331px;width:100px">2026-02-18</div>
<div class="rn" style="top:352px">9</div>
<div class="c l" style="left:46px;top:352px;width:160px">hustle.mindset</div>
<div class="c l" style="left:207px;top:352px;width:200px">Tessa Martin</div>
<div class="c" style="left:408px;top:352px;width:70px"><div style="position:absolute;left:50%;transform:translateX(-50%);white-space:nowrap">t 2 business</div></div>
<div class="c m" style="left:479px;top:352px;width:95px">169,176</div>
<div class="c m" style="left:575px;top:352px;width:90px">2,624</div>
<div class="c m" style="left:666px;top:352px;width:75px">289</div>
<div class="c m" style="left:742px;top:352px;width:105px">FALSE</div>
<div class="c m" style="left:848px;top:352px;width:90px">FALSE</div>
<div class="c m" style="left:939px;top:352px;width:100px">Business</div>
<div class="ab" style="left:1040px;top:368px;width:130px;height:1px;background:#2b63cf"></div>
<div class="c" style="left:1040px;top:352px;width:130px"><div style="position:absolute;left:50%;transform:translateX(-50%);white-space:nowrap"><span class="lk">s://www.hustlemindset.</span></div></div>
<div class="c m" style="left:1171px;top:352px;width:100px">2.78</div>
<div class="c r" style="left:1272px;top:352px;width:220px">3292</div>
<div class="c r" style="left:1493px;top:352px;width:160px">173</div>
<div class="c r" style="left:1654px;top:352px;width:100px">2026-02-18</div>
<div class="rn" style="top:373px">10</div>
<div class="c l" style="left:46px;top:373px;width:160px"><span class="lk">strengthlab.co</span></div>
<div class="c l" style="left:207px;top:373px;width:200px">Soren Roberts</div>
<div class="c" style="left:408px;top:373px;width:70px"><div style="position:absolute;left:50%;transform:translateX(-50%);white-space:nowrap">| Transform</div></div>
<div class="c m" style="left:479px;top:373px;width:95px">149,123</div>
<div class="c m" style="left:575px;top:373px;width:90px">4,564</div>
<div class="c m" style="left:666px;top:373px;width:75px">1,102</div>
<div class="c m" style="left:742px;top:373px;width:105px">FALSE</div>
<div class="c m" style="left:848px;top:373px;width:90px">TRUE</div>
<div class="c m" style="left:939px;top:373px;width:100px">Fitness</div>
<div class="c m" style="left:1171px;top:373px;width:100px">2.05</div>
<div class="c r" style="left:1272px;top:373px;width:220px">2139</div>
<div class="c r" style="left:1493px;top:373px;width:160px">118</div>
<div class="c r" style="left:1654px;top:373px;width:100px">2026-02-18</div>
<div class="rn" style="top:394px">11</div>
<div class="c l" style="left:46px;top:394px;width:160px">thebeautyhive</div>
<div class="c l" style="left:207px;top:394px;width:200px">Iris Singh</div>
<div class="c" style="left:408px;top:394px;width:70px"><div style="position:absolute;left:50%;transform:translateX(-50%);white-space:nowrap">cate | Ingred</div></div>
<div class="c m" style="left:479px;top:394px;width:95px">94,458</div>
<div class="c m" style="left:575px;top:394px;width:90px">1,331</div>
<div class="c m" style="left:666px;top:394px;width:75px">246</div>
<div class="c m" style="left:742px;top:394px;width:105px">FALSE</div>
<div class="c m" style="left:848px;top:394px;width:90px">FALSE</div>
<div class="c m" style="left:939px;top:394px;width:100px">Beauty</div>
<div class="c m" style="left:1171px;top:394px;width:100px">3.35</div>
<div class="c r" style="left:1272px;top:394px;width:220px">2215</div>
<div class="c r" style="left:1493px;top:394px;width:160px">94</div>
<div class="c r" style="left:1654px;top:394px;width:100px">2026-02-18</div>
<div class="rn" style="top:415px">12</div>
<div class="c l" style="left:46px;top:415px;width:160px">simplylaura</div>
<div class="c l" style="left:207px;top:415px;width:200px">Ivy Young</div>
<div class="c" style="left:408px;top:415px;width:70px"><div style="position:absolute;left:50%;transform:translateX(-50%);white-space:nowrap">+ plants and</div></div>
<div class="c m" style="left:479px;top:415px;width:95px">85,253</div>
<div class="c m" style="left:575px;top:415px;width:90px">3,893</div>
<div class="c m" style="left:666px;top:415px;width:75px">1,231</div>
<div class="c m" style="left:742px;top:415px;width:105px">FALSE</div>
<div class="c m" style="left:848px;top:415px;width:90px">FALSE</div>
<div class="c m" style="left:939px;top:415px;width:100px">Lifestyle</div>
<div class="c m" style="left:1171px;top:415px;width:100px">3.66</div>
<div class="c r" style="left:1272px;top:415px;width:220px">2184</div>
<div class="c r" style="left:1493px;top:415px;width:160px">158</div>
<div class="c r" style="left:1654px;top:415px;width:100px">2026-02-18</div>
<div class="rn" style="top:436px">13</div>
<div class="c l" style="left:46px;top:436px;width:160px">lip.art.daily</div>
<div class="c l" style="left:207px;top:436px;width:200px">Adrian Chen</div>
<div class="c" style="left:408px;top:436px;width:70px"><div style="position:absolute;left:50%;transform:translateX(-50%);white-space:nowrap">ecialist | Mia</div></div>
<div class="c m" style="left:479px;top:436px;width:95px">84,903</div>
<div class="c m" style="left:575px;top:436px;width:90px">690</div>
<div class="c m" style="left:666px;top:436px;width:75px">166</div>
<div class="c m" style="left:742px;top:436px;width:105px">FALSE</div>
<div class="c m" style="left:848px;top:436px;width:90px">FALSE</div>
<div class="c m" style="left:939px;top:436px;width:100px">Beauty</div>
<div class="ab" style="left:1040px;top:452px;width:130px;height:1px;background:#2b63cf"></div>
<div class="c" style="left:1040px;top:436px;width:130px"><div style="position:absolute;left:50%;transform:translateX(-50%);white-space:nowrap"><span class="lk">tps://www.lipartdaily.co</span></div></div>
<div class="c m" style="left:1171px;top:436px;width:100px">4.46</div>
<div class="c r" style="left:1272px;top:436px;width:220px">2650</div>
<div class="c r" style="left:1493px;top:436px;width:160px">145</div>
<div class="c r" style="left:1654px;top:436px;width:100px">2026-02-18</div>
<div class="rn" style="top:457px">14</div>
<div class="c l" style="left:46px;top:457px;width:160px">appdev.tips</div>
<div class="c l" style="left:207px;top:457px;width:200px">Matteo Muller</div>
<div class="c" style="left:408px;top:457px;width:70px"><div style="position:absolute;left:50%;transform:translateX(-50%);white-space:nowrap">by day, cont</div></div>
<div class="c m" style="left:479px;top:457px;width:95px">79,729</div>
<div class="c m" style="left:575px;top:457px;width:90px">4,911</div>
<div class="c m" style="left:666px;top:457px;width:75px">396</div>
<div class="c m" style="left:742px;top:457px;width:105px">FALSE</div>
<div class="c m" style="left:848px;top:457px;width:90px">FALSE</div>
<div class="c m" style="left:939px;top:457px;width:100px">Tech</div>
<div class="ab" style="left:1040px;top:473px;width:130px;height:1px;background:#2b63cf"></div>
<div class="c" style="left:1040px;top:457px;width:130px"><div style="position:absolute;left:50%;transform:translateX(-50%);white-space:nowrap"><span class="lk">tps://linktr.ee/appdevti</span></div></div>
<div class="c m" style="left:1171px;top:457px;width:100px">3.3</div>
<div class="c r" style="left:1272px;top:457px;width:220px">1841</div>
<div class="c r" style="left:1493px;top:457px;width:160px">142</div>
<div class="c r" style="left:1654px;top:457px;width:100px">2026-02-18</div>
<div class="rn" style="top:478px">15</div>
<div class="c l" style="left:46px;top:478px;width:160px">lensbyluca</div>
<div class="c l" style="left:207px;top:478px;width:200px">Alex Young</div>
<div class="c" style="left:408px;top:478px;width:70px"><div style="position:absolute;left:50%;transform:translateX(-50%);white-space:nowrap">ston | Portra</div></div>
<div class="c m" style="left:479px;top:478px;width:95px">79,446</div>
<div class="c m" style="left:575px;top:478px;width:90px">1,918</div>
<div class="c m" style="left:666px;top:478px;width:75px">795</div>
<div class="c m" style="left:742px;top:478px;width:105px">FALSE</div>
<div class="c m" style="left:848px;top:478px;width:90px">FALSE</div>
<div class="c m" style="left:939px;top:478px;width:100px">Photography</div>
<div class="ab" style="left:1040px;top:494px;width:130px;height:1px;background:#2b63cf"></div>
<div class="c" style="left:1040px;top:478px;width:130px"><div style="position:absolute;left:50%;transform:translateX(-50%);white-space:nowrap"><span class="lk">ww.youtube.com/@len</span></div></div>
<div class="c m" style="left:1171px;top:478px;width:100px">5.17</div>
<div class="c r" style="left:1272px;top:478px;width:220px">2875</div>
<div class="c r" style="left:1493px;top:478px;width:160px">107</div>
<div class="c r" style="left:1654px;top:478px;width:100px">2026-02-18</div>
<div class="rn" style="top:499px">16</div>
<div class="c l" style="left:46px;top:499px;width:160px">dessert.diaries</div>
<div class="c l" style="left:207px;top:499px;width:200px">Sam Robinson</div>
<div class="c" style="left:408px;top:499px;width:70px"><div style="position:absolute;left:50%;transform:translateX(-50%);white-space:nowrap"> Recipe dev</div></div>
<div class="c m" style="left:479px;top:499px;width:95px">71,770</div>
<div class="c m" style="left:575px;top:499px;width:90px">2,132</div>
<div class="c m" style="left:666px;top:499px;width:75px">406</div>
<div class="c m" style="left:742px;top:499px;width:105px">FALSE</div>
<div class="c m" style="left:848px;top:499px;width:90px">FALSE</div>
<div class="c m" style="left:939px;top:499px;width:100px">Food</div>
<div class="ab" style="left:1040px;top:515px;width:130px;height:1px;background:#2b63cf"></div>
<div class="c" style="left:1040px;top:499px;width:130px"><div style="position:absolute;left:50%;transform:translateX(-50%);white-space:nowrap"><span class="lk">s://www.dessertdiaries.</span></div></div>
<div class="c m" style="left:1171px;top:499px;width:100px">4.74</div>
<div class="c r" style="left:1272px;top:499px;width:220px">2381</div>
<div class="c r" style="left:1493px;top:499px;width:160px">120</div>
<div class="c r" style="left:1654px;top:499px;width:100px">2026-02-18</div>
<div class="rn" style="top:520px">17</div>
<div class="c l" style="left:46px;top:520px;width:160px">beautyunboxed</div>
<div class="c l" style="left:207px;top:520px;width:200px">Jasper Hunt</div>
<div class="c" style="left:408px;top:520px;width:70px"><div style="position:absolute;left:50%;transform:translateX(-50%);white-space:nowrap">ocate | Ingre</div></div>
<div class="c m" style="left:479px;top:520px;width:95px">69,385</div>
<div class="c m" style="left:575px;top:520px;width:90px">4,413</div>
<div class="c m" style="left:666px;top:520px;width:75px">1,435</div>
<div class="c m" style="left:742px;top:520px;width:105px">FALSE</div>
<div class="c m" style="left:848px;top:520px;width:90px">FALSE</div>
<div class="c m" style="left:939px;top:520px;width:100px">Beauty</div>
<div class="ab" style="left:1040px;top:536px;width:130px;height:1px;background:#2b63cf"></div>
<div class="c" style="left:1040px;top:520px;width:130px"><div style="position:absolute;left:50%;transform:translateX(-50%);white-space:nowrap"><span class="lk">v.youtube.com/@beau</span></div></div>
<div class="c m" style="left:1171px;top:520px;width:100px">4.96</div>
<div class="c r" style="left:1272px;top:520px;width:220px">2409</div>
<div class="c r" style="left:1493px;top:520px;width:160px">84</div>
<div class="c r" style="left:1654px;top:520px;width:100px">2026-02-18</div>
<div class="rn" style="top:541px">18</div>
<div class="c l" style="left:46px;top:541px;width:160px">adventuretwin</div>
<div class="c l" style="left:207px;top:541px;width:200px">Elise Moreno</div>
<div class="c" style="left:408px;top:541px;width:70px"><div style="position:absolute;left:50%;transform:translateX(-50%);white-space:nowrap">he world | Ti</div></div>
<div class="c m" style="left:479px;top:541px;width:95px">63,901</div>
<div class="c m" style="left:575px;top:541px;width:90px">2,363</div>
<div class="c m" style="left:666px;top:541px;width:75px">100</div>
<div class="c m" style="left:742px;top:541px;width:105px">FALSE</div>
<div class="c m" style="left:848px;top:541px;width:90px">FALSE</div>
<div class="c m" style="left:939px;top:541px;width:100px">Travel</div>
<div class="c m" style="left:1171px;top:541px;width:100px">3.24</div>
<div class="c r" style="left:1272px;top:541px;width:220px">1449</div>
<div class="c r" style="left:1493px;top:541px;width:160px">62</div>
<div class="c r" style="left:1654px;top:541px;width:100px">2026-02-18</div>
<div class="rn" style="top:562px">19</div>
<div class="c l" style="left:46px;top:562px;width:160px">haute.on.budget</div>
<div class="c l" style="left:207px;top:562px;width:200px">Marcus Thompson</div>
<div class="c" style="left:408px;top:562px;width:70px"><div style="position:absolute;left:50%;transform:translateX(-50%);white-space:nowrap">| Confidence</div></div>
<div class="c m" style="left:479px;top:562px;width:95px">61,391</div>
<div class="c m" style="left:575px;top:562px;width:90px">3,949</div>
<div class="c m" style="left:666px;top:562px;width:75px">146</div>
<div class="c m" style="left:742px;top:562px;width:105px">FALSE</div>
<div class="c m" style="left:848px;top:562px;width:90px">FALSE</div>
<div class="c m" style="left:939px;top:562px;width:100px">Fashion</div>
<div class="c m" style="left:1171px;top:562px;width:100px">3.93</div>
<div class="c r" style="left:1272px;top:562px;width:220px">1688</div>
<div class="c r" style="left:1493px;top:562px;width:160px">63</div>
<div class="c r" style="left:1654px;top:562px;width:100px">2026-02-18</div>
<div class="rn" style="top:583px">20</div>
<div class="c l" style="left:46px;top:583px;width:160px">ecom.empire</div>
<div class="c l" style="left:207px;top:583px;width:200px">Victoria Nakamura</div>
<div class="c" style="left:408px;top:583px;width:70px"><div style="position:absolute;left:50%;transform:translateX(-50%);white-space:nowrap">nvestor | Edu</div></div>
<div class="c m" style="left:479px;top:583px;width:95px">59,009</div>
<div class="c m" style="left:575px;top:583px;width:90px">3,996</div>
<div class="c m" style="left:666px;top:583px;width:75px">1,412</div>
<div class="c m" style="left:742px;top:583px;width:105px">FALSE</div>
<div class="c m" style="left:848px;top:583px;width:90px">FALSE</div>
<div class="c m" style="left:939px;top:583px;width:100px">Business</div>
<div class="c m" style="left:1171px;top:583px;width:100px">2.02</div>
<div class="c r" style="left:1272px;top:583px;width:220px">834</div>
<div class="c r" style="left:1493px;top:583px;width:160px">47</div>
<div class="c r" style="left:1654px;top:583px;width:100px">2026-02-18</div>
<div class="rn" style="top:604px">21</div>
<div class="c l" style="left:46px;top:604px;width:160px">founder.stories</div>
<div class="c l" style="left:207px;top:604px;width:200px">Gemma Costa</div>
<div class="c" style="left:408px;top:604px;width:70px"><div style="position:absolute;left:50%;transform:translateX(-50%);white-space:nowrap">gist | Helping</div></div>
<div class="c m" style="left:479px;top:604px;width:95px">57,382</div>
<div class="c m" style="left:575px;top:604px;width:90px">215</div>
<div class="c m" style="left:666px;top:604px;width:75px">684</div>
<div class="c m" style="left:742px;top:604px;width:105px">FALSE</div>
<div class="c m" style="left:848px;top:604px;width:90px">FALSE</div>
<div class="c m" style="left:939px;top:604px;width:100px">Business</div>
<div class="ab" style="left:1040px;top:620px;width:130px;height:1px;background:#2b63cf"></div>
<div class="c" style="left:1040px;top:604px;width:130px"><div style="position:absolute;left:50%;transform:translateX(-50%);white-space:nowrap"><span class="lk">s://linktr.ee/foundersto</span></div></div>
<div class="c m" style="left:1171px;top:604px;width:100px">3.16</div>
<div class="c r" style="left:1272px;top:604px;width:220px">1269</div>
<div class="c r" style="left:1493px;top:604px;width:160px">84</div>
<div class="c r" style="left:1654px;top:604px;width:100px">2026-02-18</div>
<div class="rn" style="top:625px">22</div>
<div class="c l" style="left:46px;top:625px;width:160px">ceo.playbook</div>
<div class="c l" style="left:207px;top:625px;width:200px">Isabel Mitchell</div>
<div class="c" style="left:408px;top:625px;width:70px"><div style="position:absolute;left:50%;transform:translateX(-50%);white-space:nowrap">or | Atlanta m</div></div>
<div class="c m" style="left:479px;top:625px;width:95px">52,381</div>
<div class="c m" style="left:575px;top:625px;width:90px">2,471</div>
<div class="c m" style="left:666px;top:625px;width:75px">98</div>
<div class="c m" style="left:742px;top:625px;width:105px">FALSE</div>
<div class="c m" style="left:848px;top:625px;width:90px">FALSE</div>
<div class="c m" style="left:939px;top:625px;width:100px">Business</div>
<div class="ab" style="left:1040px;top:641px;width:130px;height:1px;background:#2b63cf"></div>
<div class="c" style="left:1040px;top:625px;width:130px"><div style="position:absolute;left:50%;transform:translateX(-50%);white-space:nowrap"><span class="lk">vw.youtube.com/@ceo</span></div></div>
<div class="c m" style="left:1171px;top:625px;width:100px">5.49</div>
<div class="c r" style="left:1272px;top:625px;width:220px">2013</div>
<div class="c r" style="left:1493px;top:625px;width:160px">100</div>
<div class="c r" style="left:1654px;top:625px;width:100px">2026-02-18</div>
<div class="rn" style="top:646px">23</div>
<div class="c l" style="left:46px;top:646px;width:160px">journal.with.joy</div>
<div class="c l" style="left:207px;top:646px;width:200px">Soren Campbell</div>
<div class="c" style="left:408px;top:646px;width:70px"><div style="position:absolute;left:50%;transform:translateX(-50%);white-space:nowrap">vibes | Chica</div></div>
<div class="c m" style="left:479px;top:646px;width:95px">50,340</div>
<div class="c m" style="left:575px;top:646px;width:90px">815</div>
<div class="c m" style="left:666px;top:646px;width:75px">962</div>
<div class="c m" style="left:742px;top:646px;width:105px">FALSE</div>
<div class="c m" style="left:848px;top:646px;width:90px">TRUE</div>
<div class="c m" style="left:939px;top:646px;width:100px">Lifestyle</div>
<div class="ab" style="left:1040px;top:662px;width:130px;height:1px;background:#2b63cf"></div>
<div class="c" style="left:1040px;top:646px;width:130px"><div style="position:absolute;left:50%;transform:translateX(-50%);white-space:nowrap"><span class="lk">w.youtube.com/@jour</span></div></div>
<div class="c m" style="left:1171px;top:646px;width:100px">5.3</div>
<div class="c r" style="left:1272px;top:646px;width:220px">1867</div>
<div class="c r" style="left:1493px;top:646px;width:160px">97</div>
<div class="c r" style="left:1654px;top:646px;width:100px">2026-02-18</div>
<div class="rn" style="top:667px">24</div>
<div class="c l" style="left:46px;top:667px;width:160px"><span class="lk">lashqueen.co</span></div>
<div class="c l" style="left:207px;top:667px;width:200px">Isabel Moreno</div>
<div class="c" style="left:408px;top:667px;width:70px"><div style="position:absolute;left:50%;transform:translateX(-50%);white-space:nowrap">| DM for ap</div></div>
<div class="c m" style="left:479px;top:667px;width:95px">48,871</div>
<div class="c m" style="left:575px;top:667px;width:90px">548</div>
<div class="c m" style="left:666px;top:667px;width:75px">498</div>
<div class="c m" style="left:742px;top:667px;width:105px">FALSE</div>
<div class="c m" style="left:848px;top:667px;width:90px">TRUE</div>
<div class="c m" style="left:939px;top:667px;width:100px">Beauty</div>
<div class="ab" style="left:1040px;top:683px;width:130px;height:1px;background:#2b63cf"></div>
<div class="c" style="left:1040px;top:667px;width:130px"><div style="position:absolute;left:50%;transform:translateX(-50%);white-space:nowrap"><span class="lk">ps://linktr.ee/lashqueen</span></div></div>
<div class="c m" style="left:1171px;top:667px;width:100px">4.95</div>
<div class="c r" style="left:1272px;top:667px;width:220px">1693</div>
<div class="c r" style="left:1493px;top:667px;width:160px">107</div>
<div class="c r" style="left:1654px;top:667px;width:100px">2026-02-18</div>
<div class="rn" style="top:688px">25</div>
<div class="c l" style="left:46px;top:688px;width:160px">taco.trails</div>
<div class="c l" style="left:207px;top:688px;width:200px">Emma Thompson</div>
<div class="c" style="left:408px;top:688px;width:70px"><div style="position:absolute;left:50%;transform:translateX(-50%);white-space:nowrap">hat actually t</div></div>
<div class="c m" style="left:479px;top:688px;width:95px">48,009</div>
<div class="c m" style="left:575px;top:688px;width:90px">4,287</div>
<div class="c m" style="left:666px;top:688px;width:75px">427</div>
<div class="c m" style="left:742px;top:688px;width:105px">FALSE</div>
<div class="c m" style="left:848px;top:688px;width:90px">FALSE</div>
<div class="c m" style="left:939px;top:688px;width:100px">Food</div>
<div class="ab" style="left:1040px;top:704px;width:130px;height:1px;background:#2b63cf"></div>
<div class="c" style="left:1040px;top:688px;width:130px"><div style="position:absolute;left:50%;transform:translateX(-50%);white-space:nowrap"><span class="lk">://tacotrails.myshopify</span></div></div>
<div class="c m" style="left:1171px;top:688px;width:100px">5.43</div>
<div class="c r" style="left:1272px;top:688px;width:220px">1824</div>
<div class="c r" style="left:1493px;top:688px;width:160px">84</div>
<div class="c r" style="left:1654px;top:688px;width:100px">2026-02-18</div>
<div class="rn" style="top:709px">26</div>
<div class="c l" style="left:46px;top:709px;width:160px">analog.soul</div>
<div class="c l" style="left:207px;top:709px;width:200px">Victoria Santos</div>
<div class="c" style="left:408px;top:709px;width:70px"><div style="position:absolute;left:50%;transform:translateX(-50%);white-space:nowrap">her | Nationa</div></div>
<div class="c m" style="left:479px;top:709px;width:95px">47,383</div>
<div class="c m" style="left:575px;top:709px;width:90px">4,420</div>
<div class="c m" style="left:666px;top:709px;width:75px">411</div>
<div class="c m" style="left:742px;top:709px;width:105px">FALSE</div>
<div class="c m" style="left:848px;top:709px;width:90px">TRUE</div>
<div class="c m" style="left:939px;top:709px;width:100px">Photography</div>
<div class="c m" style="left:1171px;top:709px;width:100px">6.94</div>
<div class="c r" style="left:1272px;top:709px;width:220px">2301</div>
<div class="c r" style="left:1493px;top:709px;width:160px">122</div>
<div class="c r" style="left:1654px;top:709px;width:100px">2026-02-18</div>
<div class="rn" style="top:730px">27</div>
<div class="c l" style="left:46px;top:730px;width:160px"><span class="lk">morningrituals.co</span></div>
<div class="c l" style="left:207px;top:730px;width:200px">Theo Davis</div>
<div class="c" style="left:408px;top:730px;width:70px"><div style="position:absolute;left:50%;transform:translateX(-50%);white-space:nowrap">ooks in 2021</div></div>
<div class="c m" style="left:479px;top:730px;width:95px">46,865</div>
<div class="c m" style="left:575px;top:730px;width:90px">4,884</div>
<div class="c m" style="left:666px;top:730px;width:75px">935</div>
<div class="c m" style="left:742px;top:730px;width:105px">TRUE</div>
<div class="c m" style="left:848px;top:730px;width:90px">FALSE</div>
<div class="c m" style="left:939px;top:730px;width:100px">Lifestyle</div>
<div class="c m" style="left:1171px;top:730px;width:100px">6.46</div>
<div class="c r" style="left:1272px;top:730px;width:220px">2119</div>
<div class="c r" style="left:1493px;top:730px;width:160px">142</div>
<div class="c r" style="left:1654px;top:730px;width:100px">2026-02-18</div>
<div class="rn" style="top:751px">28</div>
<div class="c l" style="left:46px;top:751px;width:160px">thetastingfork</div>
<div class="c l" style="left:207px;top:751px;width:200px">Kai Singh</div>
<div class="c" style="left:408px;top:751px;width:70px"><div style="position:absolute;left:50%;transform:translateX(-50%);white-space:nowrap">ing easy we</div></div>
<div class="c m" style="left:479px;top:751px;width:95px">46,210</div>
<div class="c m" style="left:575px;top:751px;width:90px">426</div>
<div class="c m" style="left:666px;top:751px;width:75px">510</div>
<div class="c m" style="left:742px;top:751px;width:105px">FALSE</div>
<div class="c m" style="left:848px;top:751px;width:90px">FALSE</div>
<div class="c m" style="left:939px;top:751px;width:100px">Food</div>
<div class="ab" style="left:1040px;top:767px;width:130px;height:1px;background:#2b63cf"></div>
<div class="c" style="left:1040px;top:751px;width:130px"><div style="position:absolute;left:50%;transform:translateX(-50%);white-space:nowrap"><span class="lk">s://www.thetastingfork.</span></div></div>
<div class="c m" style="left:1171px;top:751px;width:100px">3.59</div>
<div class="c r" style="left:1272px;top:751px;width:220px">1161</div>
<div class="c r" style="left:1493px;top:751px;width:160px">42</div>
<div class="c r" style="left:1654px;top:751px;width:100px">2026-02-18</div>
<div class="rn" style="top:772px">29</div>
<div class="c l" style="left:46px;top:772px;width:160px"><span class="lk">thrift.queen.co</span></div>
<div class="c l" style="left:207px;top:772px;width:200px">Marcus Fox</div>
<div class="c" style="left:408px;top:772px;width:70px"><div style="position:absolute;left:50%;transform:translateX(-50%);white-space:nowrap">ure | Drops +</div></div>
<div class="c m" style="left:479px;top:772px;width:95px">45,614</div>
<div class="c m" style="left:575px;top:772px;width:90px">2,056</div>
<div class="c m" style="left:666px;top:772px;width:75px">864</div>
<div class="c m" style="left:742px;top:772px;width:105px">FALSE</div>
<div class="c m" style="left:848px;top:772px;width:90px">FALSE</div>
<div class="c m" style="left:939px;top:772px;width:100px">Fashion</div>
<div class="ab" style="left:1040px;top:788px;width:130px;height:1px;background:#2b63cf"></div>
<div class="c" style="left:1040px;top:772px;width:130px"><div style="position:absolute;left:50%;transform:translateX(-50%);white-space:nowrap"><span class="lk">ps://linktr.ee/thriftqueen</span></div></div>
<div class="c m" style="left:1171px;top:772px;width:100px">4.51</div>
<div class="c r" style="left:1272px;top:772px;width:220px">1440</div>
<div class="c r" style="left:1493px;top:772px;width:160px">110</div>
<div class="c r" style="left:1654px;top:772px;width:100px">2026-02-18</div>
<div class="rn" style="top:793px">30</div>
<div class="c l" style="left:46px;top:793px;width:160px">roadtrip.riley</div>
<div class="c l" style="left:207px;top:793px;width:200px">Ivy Harris</div>
<div class="c" style="left:408px;top:793px;width:70px"><div style="position:absolute;left:50%;transform:translateX(-50%);white-space:nowrap">budget | Hot</div></div>
<div class="c m" style="left:479px;top:793px;width:95px">45,399</div>
<div class="c m" style="left:575px;top:793px;width:90px">1,852</div>
<div class="c m" style="left:666px;top:793px;width:75px">929</div>
<div class="c m" style="left:742px;top:793px;width:105px">FALSE</div>
<div class="c m" style="left:848px;top:793px;width:90px">TRUE</div>
<div class="c m" style="left:939px;top:793px;width:100px">Travel</div>
<div class="ab" style="left:1040px;top:809px;width:130px;height:1px;background:#2b63cf"></div>
<div class="c" style="left:1040px;top:793px;width:130px"><div style="position:absolute;left:50%;transform:translateX(-50%);white-space:nowrap"><span class="lk">//roadtripriley.myshopif</span></div></div>
<div class="c m" style="left:1171px;top:793px;width:100px">3.32</div>
<div class="c r" style="left:1272px;top:793px;width:220px">1055</div>
<div class="c r" style="left:1493px;top:793px;width:160px">39</div>
<div class="c r" style="left:1654px;top:793px;width:100px">2026-02-18</div>
<div class="rn" style="top:814px">31</div>
<div class="c l" style="left:46px;top:814px;width:160px"><span class="lk">vintagevault.co</span></div>
<div class="c l" style="left:207px;top:814px;width:200px">Nadia Phillips</div>
<div class="c" style="left:408px;top:814px;width:70px"><div style="position:absolute;left:50%;transform:translateX(-50%);white-space:nowrap">dent | Barce</div></div>
<div class="c m" style="left:479px;top:814px;width:95px">43,724</div>
<div class="c m" style="left:575px;top:814px;width:90px">544</div>
<div class="c m" style="left:666px;top:814px;width:75px">1,141</div>
<div class="c m" style="left:742px;top:814px;width:105px">FALSE</div>
<div class="c m" style="left:848px;top:814px;width:90px">FALSE</div>
<div class="c m" style="left:939px;top:814px;width:100px">Fashion</div>
<div class="ab" style="left:1040px;top:830px;width:130px;height:1px;background:#2b63cf"></div>
<div class="c" style="left:1040px;top:814px;width:130px"><div style="position:absolute;left:50%;transform:translateX(-50%);white-space:nowrap"><span class="lk">://www.vintagevaultco</span></div></div>
<div class="c m" style="left:1171px;top:814px;width:100px">6.3</div>
<div class="c r" style="left:1272px;top:814px;width:220px">1928</div>
<div class="c r" style="left:1493px;top:814px;width:160px">57</div>
<div class="c r" style="left:1654px;top:814px;width:100px">2026-02-18</div>
<div class="rn" style="top:835px">32</div>
<div class="c l" style="left:46px;top:835px;width:160px">luxe.looks.daily</div>
<div class="c l" style="left:207px;top:835px;width:200px">Adrian Garcia</div>
<div class="c" style="left:408px;top:835px;width:70px"><div style="position:absolute;left:50%;transform:translateX(-50%);white-space:nowrap">n advocate |</div></div>
<div class="c m" style="left:479px;top:835px;width:95px">41,978</div>
<div class="c m" style="left:575px;top:835px;width:90px">2,454</div>
<div class="c m" style="left:666px;top:835px;width:75px">265</div>
<div class="c m" style="left:742px;top:835px;width:105px">FALSE</div>
<div class="c m" style="left:848px;top:835px;width:90px">FALSE</div>
<div class="c m" style="left:939px;top:835px;width:100px">Fashion</div>
<div class="ab" style="left:1040px;top:851px;width:130px;height:1px;background:#2b63cf"></div>
<div class="c" style="left:1040px;top:835px;width:130px"><div style="position:absolute;left:50%;transform:translateX(-50%);white-space:nowrap"><span class="lk">w.youtube.com/@luxe</span></div></div>
<div class="c m" style="left:1171px;top:835px;width:100px">6.49</div>
<div class="c r" style="left:1272px;top:835px;width:220px">1907</div>
<div class="c r" style="left:1493px;top:835px;width:160px">60</div>
<div class="c r" style="left:1654px;top:835px;width:100px">2026-02-18</div>
<div class="rn" style="top:856px">33</div>
<div class="c l" style="left:46px;top:856px;width:160px">fitnessbyjenna</div>
<div class="c l" style="left:207px;top:856px;width:200px">Ivy Thomas</div>
<div class="c" style="left:408px;top:856px;width:70px"><div style="position:absolute;left:50%;transform:translateX(-50%);white-space:nowrap">e coaching |</div></div>
<div class="c m" style="left:479px;top:856px;width:95px">41,812</div>
<div class="c m" style="left:575px;top:856px;width:90px">3,972</div>
<div class="c m" style="left:666px;top:856px;width:75px">1,048</div>
<div class="c m" style="left:742px;top:856px;width:105px">FALSE</div>
<div class="c m" style="left:848px;top:856px;width:90px">FALSE</div>
<div class="c m" style="left:939px;top:856px;width:100px">Fitness</div>
<div class="ab" style="left:1040px;top:872px;width:130px;height:1px;background:#2b63cf"></div>
<div class="c" style="left:1040px;top:856px;width:130px"><div style="position:absolute;left:50%;transform:translateX(-50%);white-space:nowrap"><span class="lk">itnessbyjenna.myshop</span></div></div>
<div class="c m" style="left:1171px;top:856px;width:100px">3.86</div>
<div class="c r" style="left:1272px;top:856px;width:220px">1129</div>
<div class="c r" style="left:1493px;top:856px;width:160px">41</div>
<div class="c r" style="left:1654px;top:856px;width:100px">2026-02-18</div>
<div class="rn" style="top:877px">34</div>
<div class="c l" style="left:46px;top:877px;width:160px">djlife.miami</div>
<div class="c l" style="left:207px;top:877px;width:200px">Soren Wright</div>
<div class="c" style="left:408px;top:877px;width:70px"><div style="position:absolute;left:50%;transform:translateX(-50%);white-space:nowrap">tudy to | 30k</div></div>
<div class="c m" style="left:479px;top:877px;width:95px">41,369</div>
<div class="c m" style="left:575px;top:877px;width:90px">2,697</div>
<div class="c m" style="left:666px;top:877px;width:75px">231</div>
<div class="c m" style="left:742px;top:877px;width:105px">FALSE</div>
<div class="c m" style="left:848px;top:877px;width:90px">TRUE</div>
<div class="c m" style="left:939px;top:877px;width:100px">Music</div>
<div class="ab" style="left:1040px;top:893px;width:130px;height:1px;background:#2b63cf"></div>
<div class="c" style="left:1040px;top:877px;width:130px"><div style="position:absolute;left:50%;transform:translateX(-50%);white-space:nowrap"><span class="lk">tps://linktr.ee/djlifemiam</span></div></div>
<div class="c m" style="left:1171px;top:877px;width:100px">5.1</div>
<div class="c r" style="left:1272px;top:877px;width:220px">1476</div>
<div class="c r" style="left:1493px;top:877px;width:160px">101</div>
<div class="c r" style="left:1654px;top:877px;width:100px">2026-02-18</div>
<div class="rn" style="top:898px">35</div>
<div class="c l" style="left:46px;top:898px;width:160px">minimalist.clicks</div>
<div class="c l" style="left:207px;top:898px;width:200px">Jade Allen</div>
<div class="c" style="left:408px;top:898px;width:70px"><div style="position:absolute;left:50%;transform:translateX(-50%);white-space:nowrap">r | Aerial per</div></div>
<div class="c m" style="left:479px;top:898px;width:95px">39,223</div>
<div class="c m" style="left:575px;top:898px;width:90px">446</div>
<div class="c m" style="left:666px;top:898px;width:75px">802</div>
<div class="c m" style="left:742px;top:898px;width:105px">FALSE</div>
<div class="c m" style="left:848px;top:898px;width:90px">TRUE</div>
<div class="c m" style="left:939px;top:898px;width:100px">Photography</div>
<div class="c m" style="left:1171px;top:898px;width:100px">5.41</div>
<div class="c r" style="left:1272px;top:898px;width:220px">1485</div>
<div class="c r" style="left:1493px;top:898px;width:160px">76</div>
<div class="c r" style="left:1654px;top:898px;width:100px">2026-02-18</div>
<div class="rn" style="top:919px">36</div>
<div class="c l" style="left:46px;top:919px;width:160px"><span class="lk">gadgetguru.io</span></div>
<div class="c l" style="left:207px;top:919px;width:200px">Laura Martin</div>
<div class="c" style="left:408px;top:919px;width:70px"><div style="position:absolute;left:50%;transform:translateX(-50%);white-space:nowrap">on | Making</div></div>
<div class="c m" style="left:479px;top:919px;width:95px">37,230</div>
<div class="c m" style="left:575px;top:919px;width:90px">4,448</div>
<div class="c m" style="left:666px;top:919px;width:75px">638</div>
<div class="c m" style="left:742px;top:919px;width:105px">FALSE</div>
<div class="c m" style="left:848px;top:919px;width:90px">FALSE</div>
<div class="c m" style="left:939px;top:919px;width:100px">Tech</div>
<div class="c m" style="left:1171px;top:919px;width:100px">3.7</div>
<div class="c r" style="left:1272px;top:919px;width:220px">964</div>
<div class="c r" style="left:1493px;top:919px;width:160px">35</div>
<div class="c r" style="left:1654px;top:919px;width:100px">2026-02-18</div>
<div class="rn" style="top:940px">37</div>
<div class="c l" style="left:46px;top:940px;width:160px">hiit.queen</div>
<div class="c l" style="left:207px;top:940px;width:200px">Sage Moore</div>
<div class="c" style="left:408px;top:940px;width:70px"><div style="position:absolute;left:50%;transform:translateX(-50%);white-space:nowrap">Nutrition nerd</div></div>
<div class="c m" style="left:479px;top:940px;width:95px">34,472</div>
<div class="c m" style="left:575px;top:940px;width:90px">2,869</div>
<div class="c m" style="left:666px;top:940px;width:75px">1,284</div>
<div class="c m" style="left:742px;top:940px;width:105px">FALSE</div>
<div class="c m" style="left:848px;top:940px;width:90px">TRUE</div>
<div class="c m" style="left:939px;top:940px;width:100px">Fitness</div>
<div class="ab" style="left:1040px;top:956px;width:130px;height:1px;background:#2b63cf"></div>
<div class="c" style="left:1040px;top:940px;width:130px"><div style="position:absolute;left:50%;transform:translateX(-50%);white-space:nowrap"><span class="lk">ttps://linktr.ee/hiitquee</span></div></div>
<div class="c m" style="left:1171px;top:940px;width:100px">4.75</div>
<div class="c r" style="left:1272px;top:940px;width:220px">1146</div>
<div class="c r" style="left:1493px;top:940px;width:160px">64</div>
<div class="c r" style="left:1654px;top:940px;width:100px">2026-02-18</div>
<div class="rn" style="top:961px">38</div>
<div class="c l" style="left:46px;top:961px;width:160px">lofi.escape</div>
<div class="c l" style="left:207px;top:961px;width:200px">Grace Lewis</div>
<div class="c" style="left:408px;top:961px;width:70px"><div style="position:absolute;left:50%;transform:translateX(-50%);white-space:nowrap">dy to | 15K+</div></div>
<div class="c m" style="left:479px;top:961px;width:95px">29,610</div>
<div class="c m" style="left:575px;top:961px;width:90px">4,711</div>
<div class="c m" style="left:666px;top:961px;width:75px">1,052</div>
<div class="c m" style="left:742px;top:961px;width:105px">FALSE</div>
<div class="c m" style="left:848px;top:961px;width:90px">FALSE</div>
<div class="c m" style="left:939px;top:961px;width:100px">Music</div>
<div class="c m" style="left:1171px;top:961px;width:100px">5.37</div>
<div class="c r" style="left:1272px;top:961px;width:220px">1113</div>
<div class="c r" style="left:1493px;top:961px;width:160px">61</div>
<div class="c r" style="left:1654px;top:961px;width:100px">2026-02-18</div>
<div class="rn" style="top:982px">39</div>
<div class="c l" style="left:46px;top:982px;width:160px">yoga.with.grace</div>
<div class="c l" style="left:207px;top:982px;width:200px">Riley Lewis</div>
<div class="c" style="left:408px;top:982px;width:70px"><div style="position:absolute;left:50%;transform:translateX(-50%);white-space:nowrap">petition prep</div></div>
<div class="c m" style="left:479px;top:982px;width:95px">28,965</div>
<div class="c m" style="left:575px;top:982px;width:90px">3,814</div>
<div class="c m" style="left:666px;top:982px;width:75px">827</div>
<div class="c m" style="left:742px;top:982px;width:105px">FALSE</div>
<div class="c m" style="left:848px;top:982px;width:90px">TRUE</div>
<div class="c m" style="left:939px;top:982px;width:100px">Fitness</div>
<div class="ab" style="left:1040px;top:998px;width:130px;height:1px;background:#2b63cf"></div>
<div class="c" style="left:1040px;top:982px;width:130px"><div style="position:absolute;left:50%;transform:translateX(-50%);white-space:nowrap"><span class="lk">w.youtube.com/@yoga</span></div></div>
<div class="c m" style="left:1171px;top:982px;width:100px">6.94</div>
<div class="c r" style="left:1272px;top:982px;width:220px">1407</div>
<div class="c r" style="left:1493px;top:982px;width:160px">102</div>
<div class="c r" style="left:1654px;top:982px;width:100px">2026-02-18</div>
<div class="rn" style="top:1003px">40</div>
<div class="c l" style="left:46px;top:1003px;width:160px">glowup.studio</div>
<div class="c l" style="left:207px;top:1003px;width:200px">Iris Campbell</div>
<div class="c" style="left:408px;top:1003px;width:70px"><div style="position:absolute;left:50%;transform:translateX(-50%);white-space:nowrap">ian | Skincar</div></div>
<div class="c m" style="left:479px;top:1003px;width:95px">28,813</div>
<div class="c m" style="left:575px;top:1003px;width:90px">4,253</div>
<div class="c m" style="left:666px;top:1003px;width:75px">1,027</div>
<div class="c m" style="left:742px;top:1003px;width:105px">FALSE</div>
<div class="c m" style="left:848px;top:1003px;width:90px">FALSE</div>
<div class="c m" style="left:939px;top:1003px;width:100px">Beauty</div>
<div class="ab" style="left:1040px;top:1019px;width:130px;height:1px;background:#2b63cf"></div>
<div class="c" style="left:1040px;top:1003px;width:130px"><div style="position:absolute;left:50%;transform:translateX(-50%);white-space:nowrap"><span class="lk">s://www.glowupstudio.</span></div></div>
<div class="c m" style="left:1171px;top:1003px;width:100px">3.31</div>
<div class="c r" style="left:1272px;top:1003px;width:220px">667</div>
<div class="c r" style="left:1493px;top:1003px;width:160px">48</div>
<div class="c r" style="left:1654px;top:1003px;width:100px">2026-02-18</div>
<div class="rn" style="top:1024px">41</div>
<div class="c l" style="left:46px;top:1024px;width:160px">wildlensphoto</div>
<div class="c l" style="left:207px;top:1024px;width:200px">Ethan Olsen</div>
<div class="c" style="left:408px;top:1024px;width:70px"><div style="position:absolute;left:50%;transform:translateX(-50%);white-space:nowrap">r | Aerial per</div></div>
<div class="c m" style="left:479px;top:1024px;width:95px">28,264</div>
<div class="c m" style="left:575px;top:1024px;width:90px">3,270</div>
<div class="c m" style="left:666px;top:1024px;width:75px">321</div>
<div class="c m" style="left:742px;top:1024px;width:105px">FALSE</div>
<div class="c m" style="left:848px;top:1024px;width:90px">FALSE</div>
<div class="c m" style="left:939px;top:1024px;width:100px">Photography</div>
<div class="c m" style="left:1171px;top:1024px;width:100px">4</div>
<div class="c r" style="left:1272px;top:1024px;width:220px">791</div>
<div class="c r" style="left:1493px;top:1024px;width:160px">28</div>
<div class="c r" style="left:1654px;top:1024px;width:100px">2026-02-18</div>
<div class="rn" style="top:1045px">42</div>
<div class="c l" style="left:46px;top:1045px;width:160px">silicon.pulse</div>
<div class="c l" style="left:207px;top:1045px;width:200px">Lina Scott</div>
<div class="c" style="left:408px;top:1045px;width:70px"><div style="position:absolute;left:50%;transform:translateX(-50%);white-space:nowrap">thon | Makin</div></div>
<div class="c m" style="left:479px;top:1045px;width:95px">25,593</div>
<div class="c m" style="left:575px;top:1045px;width:90px">3,548</div>
<div class="c m" style="left:666px;top:1045px;width:75px">312</div>
<div class="c m" style="left:742px;top:1045px;width:105px">FALSE</div>
<div class="c m" style="left:848px;top:1045px;width:90px">TRUE</div>
<div class="c m" style="left:939px;top:1045px;width:100px">Tech</div>
<div class="c m" style="left:1171px;top:1045px;width:100px">5.36</div>
<div class="c r" style="left:1272px;top:1045px;width:220px">960</div>
<div class="c r" style="left:1493px;top:1045px;width:160px">29</div>
<div class="c r" style="left:1654px;top:1045px;width:100px">2026-02-18</div>
<div class="rn" style="top:1066px">43</div>
<div class="c l" style="left:46px;top:1066px;width:160px">bassline.jay</div>
<div class="c l" style="left:207px;top:1066px;width:200px">Victoria Tanaka</div>
<div class="c" style="left:408px;top:1066px;width:70px"><div style="position:absolute;left:50%;transform:translateX(-50%);white-space:nowrap">3+ records |</div></div>
<div class="c m" style="left:479px;top:1066px;width:95px">20,614</div>
<div class="c m" style="left:575px;top:1066px;width:90px">2,426</div>
<div class="c m" style="left:666px;top:1066px;width:75px">593</div>
<div class="c m" style="left:742px;top:1066px;width:105px">FALSE</div>
<div class="c m" style="left:848px;top:1066px;width:90px">FALSE</div>
<div class="c m" style="left:939px;top:1066px;width:100px">Music</div>
<div class="c m" style="left:1171px;top:1066px;width:100px">4.29</div>
<div class="c r" style="left:1272px;top:1066px;width:220px">619</div>
<div class="c r" style="left:1493px;top:1066px;width:160px">40</div>
<div class="c r" style="left:1654px;top:1066px;width:100px">2026-02-18</div>
<div class="rn" style="top:1087px">44</div>
<div class="c l" style="left:46px;top:1087px;width:160px">boho.blueprint</div>
<div class="c l" style="left:207px;top:1087px;width:200px">Maya King</div>
<div class="c" style="left:408px;top:1087px;width:70px"><div style="position:absolute;left:50%;transform:translateX(-50%);white-space:nowrap">n advocate |</div></div>
<div class="c m" style="left:479px;top:1087px;width:95px">19,764</div>
<div class="c m" style="left:575px;top:1087px;width:90px">2,619</div>
<div class="c m" style="left:666px;top:1087px;width:75px">1,245</div>
<div class="c m" style="left:742px;top:1087px;width:105px">FALSE</div>
<div class="c m" style="left:848px;top:1087px;width:90px">TRUE</div>
<div class="c m" style="left:939px;top:1087px;width:100px">Fashion</div>
<div class="ab" style="left:1040px;top:1103px;width:130px;height:1px;background:#2b63cf"></div>
<div class="c" style="left:1040px;top:1087px;width:130px"><div style="position:absolute;left:50%;transform:translateX(-50%);white-space:nowrap"><span class="lk">s://www.bohoblueprint.</span></div></div>
<div class="c m" style="left:1171px;top:1087px;width:100px">6.63</div>
<div class="c r" style="left:1272px;top:1087px;width:220px">917</div>
<div class="c r" style="left:1493px;top:1087px;width:160px">65</div>
<div class="c r" style="left:1654px;top:1087px;width:100px">2026-02-18</div>
<div class="rn" style="top:1108px">45</div>
<div class="c l" style="left:46px;top:1108px;width:160px">suitup.sam</div>
<div class="c l" style="left:207px;top:1108px;width:200px">Leila Phillips</div>
<div class="c" style="left:408px;top:1108px;width:70px"><div style="position:absolute;left:50%;transform:translateX(-50%);white-space:nowrap">maximum sty</div></div>
<div class="c m" style="left:479px;top:1108px;width:95px">19,540</div>
<div class="c m" style="left:575px;top:1108px;width:90px">1,534</div>
<div class="c m" style="left:666px;top:1108px;width:75px">1,328</div>
<div class="c m" style="left:742px;top:1108px;width:105px">FALSE</div>
<div class="c m" style="left:848px;top:1108px;width:90px">TRUE</div>
<div class="c m" style="left:939px;top:1108px;width:100px">Fashion</div>
<div class="c m" style="left:1171px;top:1108px;width:100px">3.98</div>
<div class="c r" style="left:1272px;top:1108px;width:220px">544</div>
<div class="c r" style="left:1493px;top:1108px;width:160px">27</div>
<div class="c r" style="left:1654px;top:1108px;width:100px">2026-02-18</div>
<div class="rn" style="top:1129px">46</div>
<div class="c l" style="left:46px;top:1129px;width:160px">startup.decoded</div>
<div class="c l" style="left:207px;top:1129px;width:200px">Emma Williams</div>
<div class="c" style="left:408px;top:1129px;width:70px"><div style="position:absolute;left:50%;transform:translateX(-50%);white-space:nowrap">ducation not</div></div>
<div class="c m" style="left:479px;top:1129px;width:95px">16,231</div>
<div class="c m" style="left:575px;top:1129px;width:90px">3,985</div>
<div class="c m" style="left:666px;top:1129px;width:75px">266</div>
<div class="c m" style="left:742px;top:1129px;width:105px">FALSE</div>
<div class="c m" style="left:848px;top:1129px;width:90px">FALSE</div>
<div class="c m" style="left:939px;top:1129px;width:100px">Tech</div>
<div class="c m" style="left:1171px;top:1129px;width:100px">4.25</div>
<div class="c r" style="left:1272px;top:1129px;width:220px">482</div>
<div class="c r" style="left:1493px;top:1129px;width:160px">21</div>
<div class="c r" style="left:1654px;top:1129px;width:100px">2026-02-18</div>
<div class="rn" style="top:1150px">47</div>
<div class="c l" style="left:46px;top:1150px;width:160px">flexfuel.coach</div>
<div class="c l" style="left:207px;top:1150px;width:200px">Priya Volkov</div>
<div class="c" style="left:408px;top:1150px;width:70px"><div style="position:absolute;left:50%;transform:translateX(-50%);white-space:nowrap">hr RYT | Bre</div></div>
<div class="c m" style="left:479px;top:1150px;width:95px">16,078</div>
<div class="c m" style="left:575px;top:1150px;width:90px">455</div>
<div class="c m" style="left:666px;top:1150px;width:75px">1,178</div>
<div class="c m" style="left:742px;top:1150px;width:105px">FALSE</div>
<div class="c m" style="left:848px;top:1150px;width:90px">TRUE</div>
<div class="c m" style="left:939px;top:1150px;width:100px">Fitness</div>
<div class="c m" style="left:1171px;top:1150px;width:100px">4.52</div>
<div class="c r" style="left:1272px;top:1150px;width:220px">508</div>
<div class="c r" style="left:1493px;top:1150px;width:160px">24</div>
<div class="c r" style="left:1654px;top:1150px;width:100px">2026-02-18</div>
<div class="rn" style="top:1171px">48</div>
<div class="c l" style="left:46px;top:1171px;width:160px">indiesound.lab</div>
<div class="c l" style="left:207px;top:1171px;width:200px">Kai Patel</div>
<div class="c" style="left:408px;top:1171px;width:70px"><div style="position:absolute;left:50%;transform:translateX(-50%);white-space:nowrap">Seattle | New</div></div>
<div class="c m" style="left:479px;top:1171px;width:95px">13,365</div>
<div class="c m" style="left:575px;top:1171px;width:90px">3,214</div>
<div class="c m" style="left:666px;top:1171px;width:75px">1,474</div>
<div class="c m" style="left:742px;top:1171px;width:105px">FALSE</div>
<div class="c m" style="left:848px;top:1171px;width:90px">FALSE</div>
<div class="c m" style="left:939px;top:1171px;width:100px">Music</div>
<div class="c m" style="left:1171px;top:1171px;width:100px">5.33</div>
<div class="c r" style="left:1272px;top:1171px;width:220px">498</div>
<div class="c r" style="left:1493px;top:1171px;width:160px">19</div>
<div class="c r" style="left:1654px;top:1171px;width:100px">2026-02-18</div>
<div class="rn" style="top:1192px">49</div>
<div class="c l" style="left:46px;top:1192px;width:160px">goldenhourshots</div>
<div class="c l" style="left:207px;top:1192px;width:200px">Olivia Patel</div>
<div class="c" style="left:408px;top:1192px;width:70px"><div style="position:absolute;left:50%;transform:translateX(-50%);white-space:nowrap">shville base</div></div>
<div class="c m" style="left:479px;top:1192px;width:95px">12,870</div>
<div class="c m" style="left:575px;top:1192px;width:90px">3,362</div>
<div class="c m" style="left:666px;top:1192px;width:75px">1,049</div>
<div class="c m" style="left:742px;top:1192px;width:105px">FALSE</div>
<div class="c m" style="left:848px;top:1192px;width:90px">TRUE</div>
<div class="c m" style="left:939px;top:1192px;width:100px">Photography</div>
<div class="ab" style="left:1040px;top:1208px;width:130px;height:1px;background:#2b63cf"></div>
<div class="c" style="left:1040px;top:1192px;width:130px"><div style="position:absolute;left:50%;transform:translateX(-50%);white-space:nowrap"><span class="lk">oldenhourshots.mysho</span></div></div>
<div class="c m" style="left:1171px;top:1192px;width:100px">6.16</div>
<div class="c r" style="left:1272px;top:1192px;width:220px">554</div>
<div class="c r" style="left:1493px;top:1192px;width:160px">41</div>
<div class="c r" style="left:1654px;top:1192px;width:100px">2026-02-18</div>
<div class="rn" style="top:1213px">50</div>
<div class="c l" style="left:46px;top:1213px;width:160px">crypto.clarity</div>
<div class="c l" style="left:207px;top:1213px;width:200px">Adrian Garcia</div>
<div class="c" style="left:408px;top:1213px;width:70px"><div style="position:absolute;left:50%;transform:translateX(-50%);white-space:nowrap">by day, cont</div></div>
<div class="c m" style="left:479px;top:1213px;width:95px">9,984</div>
<div class="c m" style="left:575px;top:1213px;width:90px">2,170</div>
<div class="c m" style="left:666px;top:1213px;width:75px">2,494</div>
<div class="c m" style="left:742px;top:1213px;width:105px">FALSE</div>
<div class="c m" style="left:848px;top:1213px;width:90px">TRUE</div>
<div class="c m" style="left:939px;top:1213px;width:100px">Tech</div>
<div class="ab" style="left:1040px;top:1229px;width:130px;height:1px;background:#2b63cf"></div>
<div class="c" style="left:1040px;top:1213px;width:130px"><div style="position:absolute;left:50%;transform:translateX(-50%);white-space:nowrap"><span class="lk">/cryptoclarity.myshopif</span></div></div>
<div class="c m" style="left:1171px;top:1213px;width:100px">7.56</div>
<div class="c r" style="left:1272px;top:1213px;width:220px">528</div>
<div class="c r" style="left:1493px;top:1213px;width:160px">25</div>
<div class="c r" style="left:1654px;top:1213px;width:100px">2026-02-18</div>
<div class="rn" style="top:1234px">51</div>
<div class="c l" style="left:46px;top:1234px;width:160px"><span class="lk">sunset.chaser.co</span></div>
<div class="c l" style="left:207px;top:1234px;width:200px">Aria Sharma</div>
<div class="c" style="left:408px;top:1234px;width:70px"><div style="position:absolute;left:50%;transform:translateX(-50%);white-space:nowrap">Sydney #bles</div></div>
<div class="c m" style="left:479px;top:1234px;width:95px">9,037</div>
<div class="c m" style="left:575px;top:1234px;width:90px">2,338</div>
<div class="c m" style="left:666px;top:1234px;width:75px">2,015</div>
<div class="c m" style="left:742px;top:1234px;width:105px">FALSE</div>
<div class="c m" style="left:848px;top:1234px;width:90px">TRUE</div>
<div class="c m" style="left:939px;top:1234px;width:100px">Lifestyle</div>
<div class="ab" style="left:1040px;top:1250px;width:130px;height:1px;background:#2b63cf"></div>
<div class="c" style="left:1040px;top:1234px;width:130px"><div style="position:absolute;left:50%;transform:translateX(-50%);white-space:nowrap"><span class="lk">//www.sunsetchaserco</span></div></div>
<div class="c m" style="left:1171px;top:1234px;width:100px">6.3</div>
<div class="c r" style="left:1272px;top:1234px;width:220px">398</div>
<div class="c r" style="left:1493px;top:1234px;width:160px">26</div>
<div class="c r" style="left:1654px;top:1234px;width:100px">2026-02-18</div>
<div class="rn" style="top:1255px">52</div>
<div class="c l" style="left:46px;top:1255px;width:160px"><span class="lk">organized.life.co</span></div>
<div class="c l" style="left:207px;top:1255px;width:200px">Sofia Anderson</div>
<div class="c" style="left:408px;top:1255px;width:70px"><div style="position:absolute;left:50%;transform:translateX(-50%);white-space:nowrap">ate | Mind, b</div></div>
<div class="c m" style="left:479px;top:1255px;width:95px">8,790</div>
<div class="c m" style="left:575px;top:1255px;width:90px">2,324</div>
<div class="c m" style="left:666px;top:1255px;width:75px">2,323</div>
<div class="c m" style="left:742px;top:1255px;width:105px">FALSE</div>
<div class="c m" style="left:848px;top:1255px;width:90px">TRUE</div>
<div class="c m" style="left:939px;top:1255px;width:100px">Lifestyle</div>
<div class="ab" style="left:1040px;top:1271px;width:130px;height:1px;background:#2b63cf"></div>
<div class="c" style="left:1040px;top:1255px;width:130px"><div style="position:absolute;left:50%;transform:translateX(-50%);white-space:nowrap"><span class="lk">s://linktr.ee/organizedli</span></div></div>
<div class="c m" style="left:1171px;top:1255px;width:100px">5.36</div>
<div class="c r" style="left:1272px;top:1255px;width:220px">329</div>
<div class="c r" style="left:1493px;top:1255px;width:160px">25</div>
<div class="c r" style="left:1654px;top:1255px;width:100px">2026-02-18</div>
<div class="rn" style="top:1276px">53</div>
<div class="c l" style="left:46px;top:1276px;width:160px"><span class="lk">filmgrain.co</span></div>
<div class="c l" style="left:207px;top:1276px;width:200px">Sofia Carter</div>
<div class="c" style="left:408px;top:1276px;width:70px"><div style="position:absolute;left:50%;transform:translateX(-50%);white-space:nowrap">her | Nationa</div></div>
<div class="c m" style="left:479px;top:1276px;width:95px">8,179</div>
<div class="c m" style="left:575px;top:1276px;width:90px">1,668</div>
<div class="c m" style="left:666px;top:1276px;width:75px">2,338</div>
<div class="c m" style="left:742px;top:1276px;width:105px">FALSE</div>
<div class="c m" style="left:848px;top:1276px;width:90px">TRUE</div>
<div class="c m" style="left:939px;top:1276px;width:100px">Photography</div>
<div class="ab" style="left:1040px;top:1292px;width:130px;height:1px;background:#2b63cf"></div>
<div class="c" style="left:1040px;top:1276px;width:130px"><div style="position:absolute;left:50%;transform:translateX(-50%);white-space:nowrap"><span class="lk">//filmgrainco.myshopif</span></div></div>
<div class="c m" style="left:1171px;top:1276px;width:100px">4.17</div>
<div class="c r" style="left:1272px;top:1276px;width:220px">238</div>
<div class="c r" style="left:1493px;top:1276px;width:160px">7</div>
<div class="c r" style="left:1654px;top:1276px;width:100px">2026-02-18</div>
<div class="ab" style="left:46px;top:165px;width:161px;height:36px;border:2px solid #2a6fe6;border-left-width:1px"></div>
<div class="ab" style="left:202px;top:196px;width:10px;height:10px;border-radius:50%;background:#0b57d0;border:1.3px solid #fff"></div>
<div class="ab" style="left:2533px;top:141px;width:12px;height:1167px;background:#fff;border-left:1px solid #e2e2e2"></div>
<div class="ab" style="left:2534px;top:141px;width:11px;height:64px;background:#f8f9fa"></div>
<div class="ab" style="left:2533px;top:165px;width:12px;height:2px;background:#dfe3ea"></div>
<div class="ab" style="left:2535px;top:206px;width:9px;height:47px;border-radius:5px;background:#dadada"></div>
<div class="ab" style="left:2533px;top:1263px;width:12px;height:1px;background:#e2e2e2"></div>
<div class="ab" style="left:2533px;top:1280px;width:12px;height:1px;background:#e2e2e2"></div>
<svg style="position:absolute;left:2534px;top:1266px;width:10px;height:10px" viewBox="0 0 10 10"><path fill="#757575" d="M2 7L5 4 8 7z" /></svg>
<svg style="position:absolute;left:2534px;top:1283px;width:10px;height:10px" viewBox="0 0 10 10"><path fill="#757575" d="M2 3L5 6 8 3z" /></svg>
<div class="ab" style="left:0;top:1295px;width:2533px;height:1px;background:#e0e0e0"></div>
<div class="ab" style="left:46px;top:1296px;width:2487px;height:12px;background:#fff"></div>
<div class="ab" style="left:0;top:1296px;width:45px;height:12px;background:#f8f9fa"></div>
<div class="ab" style="left:45px;top:1296px;width:1px;height:12px;background:#d6d6d6"></div>
<div class="ab" style="left:48px;top:1297px;width:2088px;height:9px;border-radius:5px;background:#dadada"></div>
<div class="ab" style="left:2502px;top:1296px;width:1px;height:12px;background:#e2e2e2"></div>
<div class="ab" style="left:2518px;top:1296px;width:1px;height:12px;background:#e2e2e2"></div>
<svg style="position:absolute;left:2504px;top:1297px;width:10px;height:10px" viewBox="0 0 10 10"><path fill="#757575" d="M7 2L4 5 7 8z" /></svg>
<svg style="position:absolute;left:2521px;top:1297px;width:10px;height:10px" viewBox="0 0 10 10"><path fill="#757575" d="M3 2L6 5 3 8z" /></svg>
<div class="ab" style="left:0;top:1308px;width:2545px;height:1px;background:#e2e2e2"></div>
<div class="ab" style="left:1755px;top:1267px;width:186px;height:32px;border-radius:16px;background:#fff;box-shadow:0 1px 3px rgba(60,64,67,.3),0 2px 6px 2px rgba(60,64,67,.15)"></div>
<svg class="ab" style="left:1760px;top:1270px;width:25px;height:25px" viewBox="0 0 25 25"><g fill="none" stroke="#444746" stroke-width="1.5"><path d="M12.2 6.8H7.5Q6 6.8 6 8.3V17.5Q6 19 7.5 19H16.5Q18 19 18 17.5V12.7"/><path d="M6 10.7H12.7M9.3 10.7V19M14.6 12V19"/></g><path fill="#444746" d="M16.7 4.8Q17.2 7.5 19.9 8Q17.2 8.5 16.7 11.2Q16.2 8.5 13.5 8Q16.2 7.5 16.7 4.8Z"/></svg>
<div class="t" style="left:1790px;top:1277px;font-size:13px;color:#1f1f1f">Convert to table</div>
<svg style="position:absolute;left:1891px;top:1275px;width:16px;height:16px" viewBox="0 0 24 24"><path fill="#444746" d="M7 10l5 5 5-5z" /></svg>
<svg style="position:absolute;left:1917px;top:1275px;width:16px;height:16px" viewBox="0 0 24 24"><path fill="#444746" d="M19 6.41L17.59 5 12 10.59 6.41 5 5 6.41 10.59 12 5 17.59 6.41 19 12 13.41 17.59 19 19 17.59 13.41 12z" /></svg>
<svg style="position:absolute;left:52px;top:1318px;width:20px;height:20px" viewBox="0 0 24 24"><path fill="#444746" d="M19 13h-6v6h-2v-6H5v-2h6V5h2v6h6v2z" /></svg>
<svg style="position:absolute;left:91px;top:1318px;width:22px;height:22px" viewBox="0 0 24 24"><path fill="#444746" d="M3 18h18v-2H3v2zm0-5h18v-2H3v2zm0-7v2h18V6H3z" /></svg>
<div class="ab" style="left:134px;top:1309px;width:244px;height:36px;background:#e1e9f7"></div>
<div class="t" style="left:146px;top:1322px;font-size:14px;font-weight:bold;letter-spacing:0.6px;color:#0b57d0">Tech &amp; Lifestyle Influencers</div>
<svg style="position:absolute;left:352px;top:1318px;width:20px;height:20px" viewBox="0 0 24 24"><path fill="#0b57d0" d="M7 10l5 5 5-5z" /></svg>
<svg style="position:absolute;left:2507px;top:1319px;width:20px;height:20px" viewBox="0 0 24 24"><path fill="#444746" d="M15.41 7.41L14 6l-6 6 6 6 1.41-1.41L10.83 12z" /></svg>
</body></html>
